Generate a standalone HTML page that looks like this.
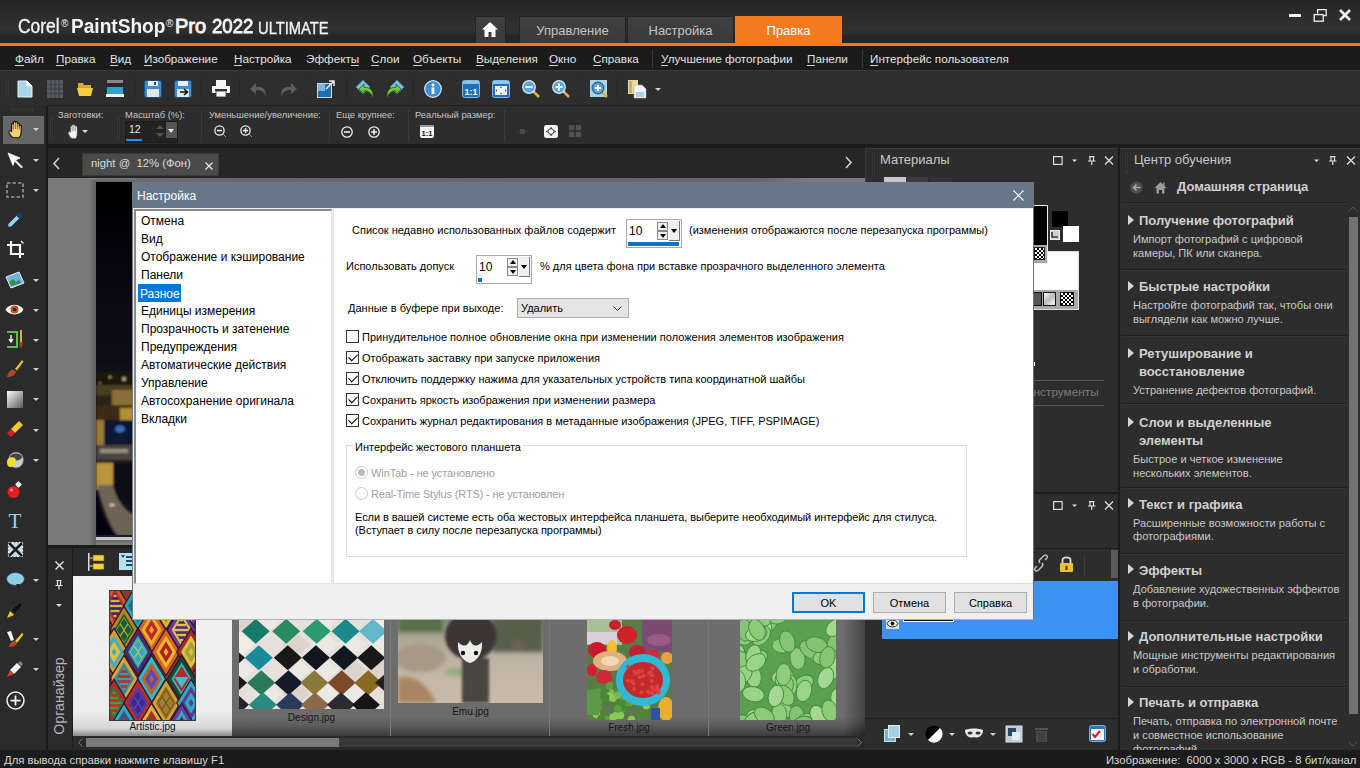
<!DOCTYPE html>
<html><head><meta charset="utf-8">
<style>
*{margin:0;padding:0;box-sizing:border-box}
html,body{width:1360px;height:768px;overflow:hidden;background:#202020;font-family:"Liberation Sans",sans-serif}
.a{position:absolute}
svg{position:absolute;overflow:visible}
#title{left:0;top:0;width:1360px;height:44px;background:linear-gradient(#242424 0%,#2c2c2c 35%,#313131 65%,#2f2c2a 76%,#20262c 84%,#22272c 92%,#2a2624 100%)}
#orange{left:0;top:43px;width:1360px;height:3px;background:#f47a20}
.ttab{position:absolute;top:16px;height:28px;background:linear-gradient(#404040,#393939);color:#c4c4c4;font-size:13px;text-align:center;line-height:28px;border:1px solid #242424;border-bottom:0}
#menubar{left:0;top:46px;width:1360px;height:25px;background:#1b1b1b;border-bottom:1px solid #3b3b3b}
.mi{position:absolute;top:52px;font-size:11.7px;color:#e2e2e2;white-space:nowrap;line-height:13px}
.mi u{text-decoration:none;border-bottom:1px solid #d0d0d0}
.msep{position:absolute;top:4px;width:1px;height:18px;background:#3a3a3a}
#toolbar{left:0;top:71px;width:1360px;height:34px;background:#2e2e2e}
.tsep{position:absolute;top:78px;width:1px;height:20px;background:#3d3d3d;border-right:1px solid #262626}
#opts{left:46px;top:105px;width:1314px;height:41px;background:#2d2d2d;border-top:1px solid #1f1f1f}
#optsb{left:46px;top:144px;width:1314px;height:4px;background:#1c1c1c}
.ol{position:absolute;top:109px;font-size:9.4px;color:#c4c4c4;white-space:nowrap}
.osep{position:absolute;top:110px;width:1px;height:32px;background:#3a3a3a}
#toolbox{left:0;top:105px;width:46px;height:645px;background:#2b2b2b}
#tbsep{left:46px;top:105px;width:2px;height:645px;background:#1a1a1a}
.dd{position:absolute;width:0;height:0;border-left:3px solid transparent;border-right:3px solid transparent;border-top:3px solid #d0d0d0}
#tabrow{left:48px;top:146px;width:817px;height:32px;background:#262626;border-top:2px solid #1b1b1b}
#canvas{left:48px;top:178px;width:817px;height:367px;background:#7a7a7a}
#night{left:96px;top:182px;width:38px;height:360px;background:linear-gradient(#010103 0%,#06060e 40%,#0b0b1a 52%,#15131c 54%,#2a2418 57%,#171410 62%,#3a3420 68%,#6b5a28 75%,#121216 80%,#5e5440 86%,#4a4238 92%,#1a1826 97%,#d0d0d0 98.5%,#333 100%)}
#orgsep{left:48px;top:545px;width:817px;height:3px;background:#1b1b1b}
#orghead{left:73px;top:548px;width:792px;height:28px;background:#2a2a2a}
#orgside{left:48px;top:548px;width:25px;height:202px;background:#2b2b2b;border-right:1px solid #1d1d1d}
#thumbs{left:73px;top:576px;width:792px;height:160px;background:#5e5e5e}
#orgscroll{left:73px;top:736px;width:792px;height:14px;background:#2a2a2a}
#status{left:0;top:750px;width:1360px;height:18px;background:#1c1c1c}
.st{position:absolute;top:754px;font-size:11.3px;color:#d4d4d4;white-space:nowrap}
#rightbg{left:865px;top:146px;width:495px;height:604px;background:#1e1e1e}
#mat{left:865px;top:148px;width:254px;height:344px;background:#2d2d2d;border-left:1px solid #3a3a3a;border-top:1px solid #3a3a3a}
#layers{left:865px;top:494px;width:254px;height:256px;background:#2d2d2d}
#learn{left:1120px;top:148px;width:240px;height:602px;background:#2d2d2d;border-top:1px solid #3a3a3a}
.ptitle{position:absolute;font-size:13px;color:#c6c6c6;white-space:nowrap}
.grip{position:absolute;width:3px;background-image:repeating-linear-gradient(90deg,transparent 0 1px,rgba(43,43,43,1) 1px 2px),repeating-linear-gradient(transparent 0 1px,#424242 1px 2px)}
.lc-h{position:absolute;left:1139px;font-size:13px;font-weight:bold;color:#d0d0d0;white-space:nowrap;line-height:18px;margin-top:1px}
.lc-d{position:absolute;left:1133px;font-size:11.1px;color:#c8c8c8;white-space:nowrap;line-height:14px}
.lc-tri{position:absolute;left:1128px;width:0;height:0;border-top:5px solid transparent;border-bottom:5px solid transparent;border-left:6px solid #d6d6d6;margin-top:-1px}
.lc-sep{position:absolute;left:1121px;width:226px;height:2px;background:#1f1f1f;border-bottom:1px solid #353535}
#dlg{left:132px;top:182px;width:902px;height:438px;background:#f0f0f0;border:1px solid #6a7888;border-right-color:#707070;border-bottom-color:#b0b0b0}
#dlgtitle{left:0;top:0;width:900px;height:25px;background:#687689;color:#fff;font-size:12px;padding:6px 0 0 4px}
#dlist{left:1px;top:26px;width:198px;height:375px;background:#fff;border-style:solid;border-width:2px 1px 1px 2px;border-color:#8a8a8a #e3e3e3 #e3e3e3 #8a8a8a}
.li{position:absolute;left:4px;font-size:12px;color:#000;line-height:16px;white-space:nowrap;padding:0 1px;margin-top:-3px}
.li.sel{left:2px;background:#0078d7;color:#fff;padding:1px 1px 0 2px;height:18px;margin-top:-4px;padding-top:2px}
#dpane{left:200px;top:26px;width:700px;height:375px;background:#fff;border-left:1px solid #e0e0e0;border-bottom:1px solid #dcdcdc}
.t{position:absolute;font-size:11px;color:#000;white-space:nowrap;line-height:13px;margin-top:1px}
.dis{color:#a0a0a0}
.spin{background:#fff;border:1px solid #a9a9a9}
.sv{position:absolute;left:2px;top:4px;font-size:12px}
.sup,.sdn{position:absolute;left:30px;width:11px;height:9px;background:#f0f0f0;border:1px solid #888}
.sup{top:2px}.sdn{top:11px}
.sup:after{content:"";position:absolute;left:2px;top:1px;border:3px solid transparent;border-bottom:4px solid #000;border-top:0}
.sdn:after{content:"";position:absolute;left:2px;top:2px;border:3px solid transparent;border-top:4px solid #000;border-bottom:0}
.sdd{position:absolute;left:42px;top:1px;width:11px;height:20px;background:#f0f0f0;border-right:1px solid #777;border-bottom:1px solid #777}
.sdd:after{content:"";position:absolute;left:2px;top:8px;border:3px solid transparent;border-top:4px solid #000;border-bottom:0}
.sbar{position:absolute;left:1px;bottom:1px;height:4px;background:#0d70c9}
.combo{background:#e5e5e5;border:1px solid #adadad;font-size:11px}
.cb{width:13px;height:13px;border:1px solid #333;background:#fff}
.cb.ck:after{content:"";position:absolute;left:2px;top:0px;width:7px;height:4px;border-left:1.3px solid #000;border-bottom:1.3px solid #000;transform:translate(0px,2px) rotate(-45deg) scaleX(1.1)}
.grp{border:1px solid #dcdcdc}
.rad{width:13px;height:13px;border:1px solid #c8c8c8;border-radius:50%;background:#fff}
.rad.on:after{content:"";position:absolute;left:2px;top:2px;width:7px;height:7px;border-radius:50%;background:#bcbcbc}
.btn{background:#e1e1e1;border:1px solid #adadad;font-size:11px;text-align:center;line-height:20px;color:#000}
.btn.def{border:2px solid #0078d7;line-height:18px}
</style></head><body>
<div id="title" class="a"></div>
<div class="a" style="left:18px;top:14px;font-size:20px;color:#f4f4f4;white-space:nowrap;line-height:24px">
<span style="position:absolute;left:0;top:0;display:inline-block;transform:scaleX(0.87);transform-origin:0 0;-webkit-text-stroke:0.35px #f4f4f4">Corel</span>
<span style="position:absolute;left:43px;top:-2px;font-size:10px">®</span>
<span style="position:absolute;left:53px;top:0;font-weight:bold;display:inline-block;transform:scaleX(0.955);transform-origin:0 0">PaintShop</span>
<span style="position:absolute;left:148px;top:-2px;font-size:10px">®</span>
<span style="position:absolute;left:157px;top:0;display:inline-block;transform:scaleX(1.0);transform-origin:0 0;-webkit-text-stroke:0.9px #f4f4f4">Pro</span>
<span style="position:absolute;left:194px;top:0;display:inline-block;transform:scaleX(0.93);transform-origin:0 0;-webkit-text-stroke:0.9px #f4f4f4">2022</span>
<span style="position:absolute;left:240px;top:3px;font-size:16px;display:inline-block;transform:scaleX(0.92);transform-origin:0 0;-webkit-text-stroke:0.3px #f4f4f4">ULTIMATE</span>
</div>
<div class="ttab" style="left:475px;width:31px"></div>
<svg style="left:481px;top:21px" width="18" height="17" viewBox="0 0 18 17"><path d="M9 1L1 8.5H3.5V16H7.5V11H10.5V16H14.5V8.5H17Z" fill="#fff"/></svg>
<div class="ttab" style="left:519px;width:107px">Управление</div>
<div class="ttab" style="left:627px;width:107px">Настройка</div>
<div class="ttab" style="left:735px;width:107px;background:#f47a20;color:#fff;border-color:#f47a20">Правка</div>
<div id="orange" class="a"></div>
<svg style="left:1289px;top:14px" width="12" height="4"><rect x="0" y="0" width="12" height="3" fill="#f0f0f0"/></svg>
<svg style="left:1313px;top:8px" width="14" height="14" viewBox="0 0 14 14"><path d="M4.6 5.5V1.6H13.2V7.6H10.4" fill="none" stroke="#f0f0f0" stroke-width="1.3"/><rect x="1.2" y="6.6" width="9" height="6.6" fill="none" stroke="#f0f0f0" stroke-width="1.3"/></svg>
<svg style="left:1339px;top:9px" width="12" height="12" viewBox="0 0 12 12"><path d="M1 1L11 11M11 1L1 11" stroke="#f0f0f0" stroke-width="2.6"/></svg>
<div id="menubar" class="a"></div>
<div class="mi" style="left:15px"><u>Ф</u>айл</div>
<div class="mi" style="left:56px"><u>П</u>равка</div>
<div class="mi" style="left:110px"><u>В</u>ид</div>
<div class="mi" style="left:144px"><u>И</u>зображение</div>
<div class="mi" style="left:234px"><u>Н</u>астройка</div>
<div class="mi" style="left:306px">Эффект<u>ы</u></div>
<div class="mi" style="left:371px"><u>С</u>лои</div>
<div class="mi" style="left:413px"><u>О</u>бъекты</div>
<div class="mi" style="left:476px"><u>В</u>ыделения</div>
<div class="mi" style="left:549px"><u>О</u>кно</div>
<div class="mi" style="left:593px"><u>С</u>правка</div>
<div class="msep" style="left:652px;top:50px"></div>
<div class="mi" style="left:661px"><u>У</u>лучшение фотографии</div>
<div class="mi" style="left:807px"><u>П</u>анели</div>
<div class="msep" style="left:862px;top:50px"></div>
<div class="mi" style="left:870px"><u>И</u>нтерфейс пользователя</div>
<div id="toolbar" class="a"></div>
<div class="grip" style="left:6px;top:77px;height:20px;width:4px"></div>
<!-- new doc -->
<svg style="left:17px;top:80px" width="16" height="18" viewBox="0 0 16 18"><path d="M1 1H10L15 6V17H1Z" fill="#a9d6ea" stroke="#e8f4fa" stroke-width="1"/><path d="M10 1V6H15" fill="#fff" stroke="#fff"/></svg>
<!-- grid -->
<svg style="left:47px;top:80px" width="16" height="18" viewBox="0 0 16 18"><rect x="0" y="0" width="16" height="18" fill="#555a60"/><path d="M4 0V18M8 0V18M12 0V18M0 4.5H16M0 9H16M0 13.5H16" stroke="#3b3f44" stroke-width="1"/></svg>
<!-- open folder -->
<svg style="left:77px;top:81px" width="16" height="16" viewBox="0 0 16 16"><path d="M1 2H6L7 4H14V8H1Z" fill="#d9a928"/><path d="M0 7H16L14 15H2Z" fill="#f2cf3c"/></svg>
<!-- scanner -->
<svg style="left:106px;top:80px" width="18" height="18" viewBox="0 0 18 18"><rect x="1" y="0" width="16" height="3" fill="#888"/><path d="M2 3H16L14 7H4Z" fill="#2a2a2a"/><rect x="1" y="7" width="16" height="7" fill="#2ea3d0"/><rect x="0" y="14" width="18" height="3" fill="#f2f2f2"/></svg>
<div class="tsep" style="left:134px"></div>
<!-- save -->
<svg style="left:144px;top:80px" width="18" height="18" viewBox="0 0 18 18"><rect x="0.5" y="0.5" width="17" height="17" rx="2" fill="#3b8fd0" stroke="#1b4f80"/><rect x="4" y="1" width="10" height="5" fill="#e8eef4"/><rect x="10" y="2" width="2" height="3" fill="#1b4f80"/><rect x="3" y="9" width="12" height="8" fill="#dfe6ec"/></svg>
<!-- save as -->
<svg style="left:174px;top:80px" width="18" height="18" viewBox="0 0 18 18"><rect x="0.5" y="0.5" width="17" height="17" rx="2" fill="#3b8fd0" stroke="#1b4f80"/><rect x="4" y="1" width="10" height="5" fill="#e8eef4"/><rect x="3" y="9" width="12" height="8" fill="#dfe6ec"/><path d="M6 12H13M10 9L13.5 12L10 15" stroke="#111" stroke-width="1.6" fill="none"/></svg>
<div class="tsep" style="left:201px"></div>
<!-- print -->
<svg style="left:212px;top:80px" width="18" height="18" viewBox="0 0 18 18"><rect x="4" y="0" width="10" height="6" fill="#f4f4f4"/><rect x="0" y="6" width="18" height="7" rx="1" fill="#f4f4f4"/><rect x="3" y="9" width="12" height="2" fill="#333"/><rect x="4" y="11" width="10" height="6" fill="#f4f4f4" stroke="#333" stroke-width="0.8"/></svg>
<div class="tsep" style="left:239px"></div>
<!-- undo grey -->
<svg style="left:250px;top:81px" width="17" height="16" viewBox="0 0 17 16"><path d="M16 15C16 8 12 5 6 6V2L0 8L6 13V9C11 8.5 14 11 16 15Z" fill="#5a5f63"/></svg>
<svg style="left:280px;top:81px" width="17" height="16" viewBox="0 0 17 16"><path d="M1 15C1 8 5 5 11 6V2L17 8L11 13V9C6 8.5 3 11 1 15Z" fill="#5a5f63"/></svg>
<div class="tsep" style="left:307px"></div>
<!-- resize -->
<svg style="left:317px;top:80px" width="18" height="18" viewBox="0 0 18 18"><rect x="0.5" y="3.5" width="14" height="14" fill="#1d6fb0" stroke="#cfd8de"/><rect x="1" y="4" width="7" height="7" fill="#78b8e0"/><path d="M9 9L17 1M12 1H17V6" stroke="#f0f0f0" stroke-width="1.5" fill="none"/></svg>
<div class="tsep" style="left:346px"></div>
<!-- undo blue/green -->
<svg style="left:356px;top:80px" width="19" height="18" viewBox="0 0 19 18"><path d="M0 7L7 0L14 7L7 14Z" fill="#7fb9e0" stroke="#3b7cb0"/><path d="M17 17C17 10 14 7 8 7.5V4L3 9L8 14V10.5C12 10.5 15 13 17 17Z" fill="#78c83c" stroke="#2f6b12" stroke-width="0.8"/></svg>
<svg style="left:385px;top:80px" width="19" height="18" viewBox="0 0 19 18"><path d="M19 7L12 0L5 7L12 14Z" fill="#7fb9e0" stroke="#3b7cb0"/><path d="M2 17C2 10 5 7 11 7.5V4L16 9L11 14V10.5C7 10.5 4 13 2 17Z" fill="#78c83c" stroke="#2f6b12" stroke-width="0.8"/></svg>
<div class="tsep" style="left:413px"></div>
<!-- info -->
<svg style="left:424px;top:80px" width="18" height="18" viewBox="0 0 18 18"><circle cx="9" cy="9" r="8.3" fill="#3e8fd3" stroke="#d8e8f4" stroke-width="1.2"/><circle cx="9" cy="5" r="1.5" fill="#fff"/><rect x="7.6" y="7.5" width="2.8" height="6.5" fill="#fff"/></svg>
<div class="tsep" style="left:451px"></div>
<!-- 1:1 -->
<svg style="left:462px;top:80px" width="18" height="18" viewBox="0 0 18 18"><rect x="0.5" y="0.5" width="17" height="17" rx="2" fill="#1e6fb5" stroke="#7db9e6"/><rect x="1" y="1" width="16" height="3" fill="#8fc5ea"/><text x="9" y="14.5" font-size="9" font-weight="bold" fill="#fff" text-anchor="middle" font-family="Liberation Sans">1:1</text></svg>
<!-- fit -->
<svg style="left:492px;top:80px" width="18" height="18" viewBox="0 0 18 18"><rect x="0.5" y="0.5" width="17" height="17" rx="2" fill="#1e6fb5" stroke="#7db9e6"/><rect x="1" y="1" width="16" height="3" fill="#8fc5ea"/><rect x="3" y="6" width="12" height="9" fill="#f2f2f2"/><path d="M9 6.5L7.5 8H10.5ZM9 14.5L7.5 13H10.5ZM3.5 10.5L5 9V12ZM14.5 10.5L13 9V12Z" fill="#1e6fb5"/></svg>
<!-- zoom out -->
<svg style="left:522px;top:80px" width="18" height="18" viewBox="0 0 18 18"><path d="M11 11L17 17" stroke="#e0b040" stroke-width="2.5"/><circle cx="7" cy="7" r="6.3" fill="#5ea7d8" stroke="#dbe9f3" stroke-width="1.2"/><rect x="3.5" y="6" width="7" height="2" fill="#fff"/></svg>
<!-- zoom in -->
<svg style="left:552px;top:80px" width="18" height="18" viewBox="0 0 18 18"><path d="M11 11L17 17" stroke="#e0b040" stroke-width="2.5"/><circle cx="7" cy="7" r="6.3" fill="#5ea7d8" stroke="#dbe9f3" stroke-width="1.2"/><rect x="3.5" y="6" width="7" height="2" fill="#fff"/><rect x="6" y="3.5" width="2" height="7" fill="#fff"/></svg>
<div class="tsep" style="left:580px"></div>
<!-- zoom box -->
<svg style="left:590px;top:80px" width="18" height="18" viewBox="0 0 18 18"><rect x="0" y="0" width="17" height="17" fill="#a9d3ea"/><path d="M11 11L17 17" stroke="#e0b040" stroke-width="2.5"/><circle cx="8" cy="8" r="5.8" fill="#5ea7d8" stroke="#1d5f90" stroke-width="1.2"/><rect x="5" y="7" width="6" height="2" fill="#fff"/><rect x="7" y="5" width="2" height="6" fill="#fff"/></svg>
<div class="tsep" style="left:617px"></div>
<!-- paste -->
<svg style="left:628px;top:80px" width="19" height="18" viewBox="0 0 19 18"><rect x="0" y="0" width="10" height="14" fill="#e8d9a0"/><rect x="1" y="1" width="3" height="12" fill="#c8b070"/><path d="M6 5H14L18 9V18H6Z" fill="#f4f4f4" stroke="#bbb" stroke-width="0.6"/><rect x="8" y="12" width="8" height="5" fill="#a8d4ea"/></svg>
<div class="dd" style="left:655px;top:88px;border-left-width:3px;border-right-width:3px;border-top-width:3px"></div>
<div id="opts" class="a"></div>
<div id="optsb" class="a"></div>
<div class="grip" style="left:50px;top:116px;height:24px;width:4px"></div>
<div class="ol" style="left:58px">Заготовки:</div>
<svg style="left:68px;top:124px" width="13" height="15" viewBox="0 0 13 15"><path d="M3 14C1.5 12 0.5 9.5 0.5 8.5C0.5 7.5 2 7.5 2.7 8.8V3C2.7 2 4.2 2 4.2 3V7.5V1.5C4.2 0.5 5.8 0.5 5.8 1.5V7V2C5.8 1 7.4 1 7.4 2V7.5V3C7.4 2 9 2 9 3V10C9 12 8 14 7.5 14.5Z" fill="#f2f2f2" stroke="#999" stroke-width="0.5"/></svg>
<div class="dd" style="left:82px;top:130px;border-top-color:#ddd"></div>
<div class="grip" style="left:117px;top:116px;height:24px;width:4px"></div>
<div class="ol" style="left:125px">Масштаб (%):</div>
<div class="a" style="left:125px;top:121px;width:53px;height:22px;background:#222;border:1px solid #1a1a1a"></div>
<div class="a" style="left:129px;top:123px;font-size:10.5px;color:#dfe6f5">12</div>
<div class="a" style="left:126px;top:139px;width:16px;height:2px;background:#2f8ee6"></div>
<svg style="left:156px;top:124px" width="8" height="14" viewBox="0 0 8 14"><path d="M0 5L4 1L8 5ZM0 9L4 13L8 9Z" fill="#555"/></svg>
<div class="a" style="left:166px;top:122px;width:11px;height:16px;background:#555"></div>
<div class="dd" style="left:168px;top:129px;border-left-width:3.5px;border-right-width:3.5px;border-top-width:4px;border-top-color:#e6e6e6"></div>
<div class="osep" style="left:201px"></div>
<div class="ol" style="left:209px">Уменьшение/увеличение:</div>
<svg style="left:214px;top:125px" width="13" height="13" viewBox="0 0 13 13"><circle cx="5.5" cy="5.5" r="4.6" fill="none" stroke="#eee" stroke-width="1.3"/><rect x="3" y="4.8" width="5" height="1.5" fill="#eee"/><path d="M9 9L12 12" stroke="#999" stroke-width="1"/></svg>
<svg style="left:240px;top:125px" width="13" height="13" viewBox="0 0 13 13"><circle cx="5.5" cy="5.5" r="4.6" fill="none" stroke="#eee" stroke-width="1.3"/><rect x="3" y="4.8" width="5" height="1.5" fill="#eee"/><rect x="4.8" y="3" width="1.5" height="5" fill="#eee"/><path d="M9 9L12 12" stroke="#999" stroke-width="1"/></svg>
<div class="osep" style="left:329px"></div>
<div class="ol" style="left:336px">Еще крупнее:</div>
<svg style="left:341px;top:126px" width="12" height="12" viewBox="0 0 12 12"><circle cx="6" cy="6" r="5.2" fill="none" stroke="#eee" stroke-width="1.3"/><rect x="3" y="5.2" width="6" height="1.6" fill="#eee"/></svg>
<svg style="left:368px;top:126px" width="12" height="12" viewBox="0 0 12 12"><circle cx="6" cy="6" r="5.2" fill="none" stroke="#eee" stroke-width="1.3"/><rect x="3" y="5.2" width="6" height="1.6" fill="#eee"/><rect x="5.2" y="3" width="1.6" height="6" fill="#eee"/></svg>
<div class="osep" style="left:408px"></div>
<div class="ol" style="left:415px">Реальный размер:</div>
<svg style="left:420px;top:125px" width="14" height="13" viewBox="0 0 14 13"><rect x="0" y="0" width="14" height="13" rx="2" fill="#f4f4f4"/><rect x="0" y="0" width="14" height="2" fill="#999"/><text x="7" y="11" font-size="7.5" font-weight="bold" fill="#111" text-anchor="middle" font-family="Liberation Sans">1:1</text></svg>
<div class="osep" style="left:504px"></div>
<svg style="left:517px;top:128px" width="11" height="8" viewBox="0 0 11 8"><rect x="3" y="1" width="5" height="5" fill="#4a4a4a"/><path d="M0 3.5H3M8 3.5H11" stroke="#3a3a3a"/></svg>
<svg style="left:544px;top:125px" width="14" height="13" viewBox="0 0 14 13"><rect x="0" y="0" width="14" height="13" rx="2.5" fill="#f4f4f4"/><path d="M7 2L5.5 3.5H8.5ZM7 11L5.5 9.5H8.5ZM2 6.5L3.5 5V8ZM12 6.5L10.5 5V8Z" fill="#222"/><circle cx="7" cy="6.5" r="2.8" fill="none" stroke="#222" stroke-width="0.8"/></svg>
<svg style="left:569px;top:125px" width="12" height="12" viewBox="0 0 12 12"><rect x="0" y="0" width="12" height="12" fill="#505050"/><path d="M6 0V12M0 6H12" stroke="#2d2d2d" stroke-width="1.5"/></svg>
<div id="toolbox" class="a"></div>
<div id="tbsep" class="a"></div>
<div class="grip" style="left:12px;top:107px;height:4px;width:22px"></div>
<div class="a" style="left:3px;top:116px;width:41px;height:28px;background:#666;border-top:1px solid #6e6e6e"></div>
<!-- hand -->
<svg style="left:8px;top:120px" width="16" height="19" viewBox="0 0 16 19"><path d="M4.5 17.5C2.5 15.5 0.8 12.8 0.8 11.8C0.8 10.5 2.6 10.3 3.6 11.6V4.2C3.6 3 5.4 3 5.4 4.2V2.3C5.4 1 7.4 1 7.4 2.3V2.5C7.4 1.3 9.4 1.3 9.4 2.5V4C9.4 2.9 11.3 2.9 11.3 4V6C11.3 5 13.2 5 13.2 6V12C13.2 15 11.8 17 11 17.8Z" fill="#f6d070" stroke="#111" stroke-width="1.1" stroke-linejoin="round"/><path d="M5.4 4V9.5M7.4 2.5V9M9.4 3V9M11.3 5V9.5" stroke="#6a4a18" stroke-width="0.7"/></svg>
<div class="dd" style="left:33px;top:128px"></div>
<!-- arrow -->
<svg style="left:7px;top:152px" width="17" height="17" viewBox="0 0 17 17"><path d="M1 1L13 6L8.5 8L15.5 15L14.5 16L7.5 9L6 13.5Z" fill="#f8f8f8" stroke="#f8f8f8" stroke-width="0.8" stroke-linejoin="round"/></svg>
<div class="dd" style="left:33px;top:159px"></div>
<!-- selection -->
<svg style="left:6px;top:182px" width="18" height="16" viewBox="0 0 18 16"><rect x="1" y="1" width="16" height="14" fill="none" stroke="#9a9a9a" stroke-width="1.6" stroke-dasharray="3.5 2"/></svg>
<div class="dd" style="left:33px;top:189px"></div>
<!-- dropper -->
<svg style="left:7px;top:210px" width="18" height="18" viewBox="0 0 18 18"><path d="M12 2L16 6L13 9L9 5Z" fill="#1d3f5a"/><path d="M9.5 5.5L12.5 8.5L4 17H1V14Z" fill="#9fd0ea" stroke="#1d3f5a" stroke-width="0.8"/></svg>
<!-- crop -->
<svg style="left:7px;top:241px" width="17" height="17" viewBox="0 0 17 17"><path d="M4 0V13H17M0 4H13V17" fill="none" stroke="#f5f5f5" stroke-width="2.2"/><path d="M14 0L16.5 2.5" stroke="#f5f5f5" stroke-width="1.2"/></svg>
<!-- photo -->
<svg style="left:6px;top:272px" width="18" height="16" viewBox="0 0 18 16"><path d="M0 5L13 0L18 11L5 16Z" fill="#6fb5d8" stroke="#e8f2f8" stroke-width="1"/><path d="M3 10L7 7L10 10L13 8L15 11L5 14Z" fill="#3d8a4a"/></svg>
<div class="dd" style="left:33px;top:279px"></div>
<!-- eye -->
<svg style="left:5px;top:303px" width="19" height="13" viewBox="0 0 19 13"><path d="M0.5 6.5C4 0 15 0 18.5 6.5C15 13 4 13 0.5 6.5Z" fill="#f5f5f5"/><circle cx="9.5" cy="6.5" r="4" fill="#c0502a"/><circle cx="9.5" cy="6.5" r="1.6" fill="#3a1a10"/></svg>
<div class="dd" style="left:33px;top:309px"></div>
<!-- straighten -->
<svg style="left:6px;top:330px" width="19" height="19" viewBox="0 0 19 19"><rect x="1" y="1" width="11" height="2" fill="#5ec04a"/><rect x="1" y="16" width="11" height="2" fill="#5ec04a"/><rect x="10" y="1" width="2" height="17" fill="#5ec04a"/><path d="M5 5V11M3 9L5 12L7 9" stroke="#fff" stroke-width="1.3" fill="none"/><rect x="14" y="0" width="2" height="12" fill="#e0b030"/><path d="M13 12H17L16 17L15 18L14 17Z" fill="#a04020"/></svg>
<div class="dd" style="left:33px;top:339px"></div>
<!-- brush -->
<svg style="left:6px;top:359px" width="18" height="19" viewBox="0 0 18 19"><path d="M9 10L16 1L17.5 2.5L11 11.5Z" fill="#e8c030"/><path d="M1 18C2 14 4 11 7 10.5L10 13C9 16 6 18 1 18Z" fill="#b04a20"/></svg>
<div class="dd" style="left:33px;top:368px"></div>
<!-- gradient -->
<svg style="left:7px;top:391px" width="16" height="17" viewBox="0 0 16 17"><defs><linearGradient id="gr1" x1="0" y1="0" x2="1" y2="1"><stop offset="0" stop-color="#fafafa"/><stop offset="1" stop-color="#5a5a5a"/></linearGradient></defs><rect x="0" y="0" width="16" height="17" fill="url(#gr1)"/></svg>
<div class="dd" style="left:33px;top:398px"></div>
<!-- eraser -->
<svg style="left:6px;top:420px" width="18" height="18" viewBox="0 0 18 18"><path d="M5 9L13 1L17 5L9 13Z" fill="#f0c830"/><path d="M1 13L5 9L9 13L5 17Z" fill="#d02020"/></svg>
<div class="dd" style="left:33px;top:429px"></div>
<!-- fill -->
<svg style="left:6px;top:451px" width="18" height="18" viewBox="0 0 18 18"><ellipse cx="10" cy="9" rx="7.5" ry="8" fill="#ccc" stroke="#666" stroke-width="0.8"/><ellipse cx="10" cy="6" rx="6" ry="3.5" fill="#444"/><path d="M1 11C1 7 5 5 9 7C11 9 9 15 5 16C2 16 1 14 1 11Z" fill="#f2e030"/></svg>
<div class="dd" style="left:33px;top:459px"></div>
<!-- pin -->
<svg style="left:7px;top:481px" width="16" height="18" viewBox="0 0 16 18"><rect x="9" y="1" width="5" height="5" rx="1" transform="rotate(45 11.5 3.5)" fill="#e8e8e8"/><circle cx="6.5" cy="11" r="6" fill="#e02020"/><circle cx="4.5" cy="9" r="1.5" fill="#f88"/></svg>
<!-- T -->
<svg style="left:7px;top:511px" width="16" height="18" viewBox="0 0 16 18"><text x="8" y="16.5" font-size="21" fill="#8fd4ec" text-anchor="middle" font-family="Liberation Serif">T</text></svg>
<!-- X pattern -->
<svg style="left:7px;top:541px" width="17" height="17" viewBox="0 0 17 17"><rect x="1.5" y="1.5" width="14" height="14" fill="#c8dce8" stroke="#fff" stroke-width="1.2" stroke-dasharray="2 1.5"/><path d="M2 2L15 15M15 2L2 15" stroke="#1c1c1c" stroke-width="2.5"/></svg>
<!-- bubble -->
<svg style="left:6px;top:572px" width="19" height="18" viewBox="0 0 19 18"><ellipse cx="9.5" cy="7" rx="9" ry="6.5" fill="#8fcfe6" stroke="#1d3f5a" stroke-width="0.8"/><path d="M10 12L14 17L13 12Z" fill="#1c1c1c"/></svg>
<div class="dd" style="left:33px;top:579px"></div>
<!-- pen -->
<svg style="left:6px;top:601px" width="18" height="18" viewBox="0 0 18 18"><path d="M1 17L4 10L8 14Z" fill="#f0c830"/><path d="M5 9L14 1L17 4L9 13Z" fill="#111" stroke="#555" stroke-width="0.5"/></svg>
<!-- paintbrush2 -->
<svg style="left:6px;top:630px" width="18" height="18" viewBox="0 0 18 18"><path d="M1 2L5 11L8 10L5 1Z" fill="#f4f4f4"/><path d="M9 11L16 3L17.5 4.5L11 13Z" fill="#f0c830"/><path d="M3 17C4 13 6 11 9 11L11 13C10 16 7 17 3 17Z" fill="#b04a20"/></svg>
<div class="dd" style="left:33px;top:638px"></div>
<!-- dropper2 -->
<svg style="left:6px;top:660px" width="18" height="18" viewBox="0 0 18 18"><path d="M11 3L15 7L8 14L4 10Z" fill="#f4f4f4"/><path d="M14 1L17 4L15 6L12 3Z" fill="#888"/><path d="M1 17L4 10L8 14Z" fill="#d04020"/></svg>
<div class="dd" style="left:33px;top:668px"></div>
<!-- plus circle -->
<svg style="left:6px;top:691px" width="19" height="19" viewBox="0 0 19 19"><circle cx="9.5" cy="9.5" r="8.5" fill="none" stroke="#f0f0f0" stroke-width="1.5"/><rect x="4.5" y="8.7" width="10" height="1.8" fill="#f0f0f0"/><rect x="8.6" y="4.5" width="1.8" height="10" fill="#f0f0f0"/></svg>
<div id="tabrow" class="a"></div>
<svg style="left:53px;top:157px" width="7" height="13" viewBox="0 0 7 13"><path d="M6 1L1 6.5L6 12" fill="none" stroke="#cfcfcf" stroke-width="1.6"/></svg>
<div class="a" style="left:82px;top:153px;width:137px;height:23px;background:#4a4a4a;border:1px solid #3a3a3a"></div>
<div class="a" style="left:91px;top:157px;font-size:11.3px;color:#dcdcdc;white-space:nowrap;line-height:13px">night @&nbsp; 12% (Фон)</div>
<svg style="left:205px;top:162px" width="8" height="8" viewBox="0 0 8 8"><path d="M0.5 0.5L7.5 7.5M7.5 0.5L0.5 7.5" stroke="#e0e0e0" stroke-width="1.4"/></svg>
<svg style="left:845px;top:156px" width="7" height="13" viewBox="0 0 7 13"><path d="M1 1L6 6.5L1 12" fill="none" stroke="#cfcfcf" stroke-width="1.6"/></svg>
<div id="canvas" class="a"></div>
<div class="a" style="left:89px;top:180px;width:7px;height:365px;background:linear-gradient(90deg,rgba(0,0,0,0),rgba(0,0,0,.22))"></div><div class="a" style="left:96px;top:178px;width:40px;height:4px;background:linear-gradient(rgba(0,0,0,0),rgba(0,0,0,.2))"></div><div class="a" style="left:136px;top:178px;width:729px;height:4px;background:linear-gradient(90deg,#6a6a6a,#666 85%,#7a7a7a 92%)"></div>
<svg style="left:96px;top:182px;overflow:hidden" width="38" height="360" viewBox="0 0 38 360"><defs><linearGradient id="ng" x1="0" y1="0" x2="0" y2="1"><stop offset="0" stop-color="#000000"/><stop offset="0.15" stop-color="#030308"/><stop offset="0.35" stop-color="#0b0a17"/><stop offset="0.5" stop-color="#0d0c18"/><stop offset="0.53" stop-color="#12101a"/><stop offset="1" stop-color="#14121a"/></linearGradient><filter id="nb" x="-20%" y="-20%" width="140%" height="140%"><feGaussianBlur stdDeviation="1.3"/></filter></defs>
<rect width="38" height="360" fill="url(#ng)"/>
<g filter="url(#nb)">
<rect x="0" y="190" width="38" height="13" fill="#1a1610"/>
<circle cx="14" cy="195" r="1.5" fill="#b0a070"/><circle cx="28" cy="197" r="2" fill="#c0b080"/><circle cx="4" cy="201" r="1" fill="#a09060"/>
<rect x="0" y="203" width="38" height="10" fill="#4a3e22"/>
<rect x="16" y="208" width="21" height="20" fill="#8a7038"/>
<rect x="0" y="213" width="16" height="15" fill="#2a2014"/>
<rect x="0" y="223" width="38" height="15" fill="#3a2c18"/>
<rect x="24" y="226" width="13" height="17" fill="#b09030"/>
<rect x="8" y="238" width="30" height="25" fill="#0e1630"/>
<ellipse cx="24" cy="247" rx="5" ry="3.5" fill="#3a70c0"/>
<rect x="0" y="238" width="8" height="25" fill="#9a7a30"/>
<rect x="0" y="263" width="38" height="15" fill="#4a4440"/>
<rect x="4" y="267" width="28" height="4" fill="#9a9080"/>
<rect x="0" y="278" width="38" height="5" fill="#201814"/>
<rect x="0" y="281" width="17" height="27" fill="#b8943c"/>
<rect x="17" y="281" width="25" height="40" fill="#0a0a12"/>
<path d="M1 303L17 303C20 318 29 328 38 333L38 354L22 354C12 343 6 323 1 303Z" fill="#6e6454"/>
<path d="M0 308C4 328 10 346 22 354H0Z" fill="#050508"/>
<ellipse cx="16" cy="323" rx="3" ry="1.2" fill="#d0d0c0"/>
</g>
<rect x="0" y="353" width="38" height="2" fill="#1a1a30"/>
<rect x="0" y="355" width="38" height="3" fill="#c8c8c8"/><rect x="0" y="358" width="38" height="2" fill="#6a6a6a"/>
</svg>
<div id="orgsep" class="a"></div>
<div id="orgside" class="a"></div>
<div id="orghead" class="a"></div>
<svg style="left:55px;top:561px" width="9" height="9" viewBox="0 0 9 9"><path d="M0.5 0.5L8.5 8.5M8.5 0.5L0.5 8.5" stroke="#e8e8e8" stroke-width="1.4"/></svg>
<svg style="left:55px;top:580px" width="8" height="10" viewBox="0 0 8 10"><path d="M1.5 0.5H6.5M2.5 0.5V5M5.5 0.5V5M0.5 5.5H7.5M4 5.5V9.5" stroke="#e8e8e8" stroke-width="1.2" fill="none"/></svg>
<div class="dd" style="left:56px;top:604px;border-top-color:#ddd"></div>
<div class="a" style="left:19px;top:689px;width:80px;font-size:14.2px;color:#b4b4b4;white-space:nowrap;transform:rotate(-90deg);transform-origin:50% 50%;line-height:14px;text-align:center">Органайзер</div>
<!-- organizer header icons -->
<svg style="left:88px;top:553px" width="24" height="18" viewBox="0 0 24 18"><rect x="0" y="0" width="1.5" height="18" fill="#ddd"/><path d="M1.5 5H5M1.5 13H5" stroke="#ddd"/><rect x="5" y="2" width="11" height="6" fill="#f2d040" stroke="#6a5010" stroke-width="0.6"/><rect x="5" y="10.5" width="11" height="6" fill="#f2d040" stroke="#6a5010" stroke-width="0.6"/></svg>
<svg style="left:119px;top:553px" width="16" height="17" viewBox="0 0 16 17"><rect x="0" y="0" width="16" height="17" fill="#b8e0f0"/><path d="M2 2L6 2L4 5Z" fill="#1a4a70"/><path d="M7 4H14M7 8H14M7 12H14" stroke="#1a4a70" stroke-width="2"/></svg>
<div id="thumbs" class="a"></div>
<div class="a" style="left:73px;top:576px;width:159px;height:160px;background:linear-gradient(#f2f2f2,#ececec 85%,#d8d8d8 95%,#8a8a8a)"></div>
<div class="a" style="left:232px;top:576px;width:633px;height:160px;background:linear-gradient(#6e6e6e,#6c6c6c 88%,#5a5a5a 94%,#3a3a3a)"></div>
<div class="a" style="left:390px;top:576px;width:1px;height:160px;background:#7a7a7a"></div>
<div class="a" style="left:549px;top:576px;width:1px;height:160px;background:#7a7a7a"></div>
<div class="a" style="left:708px;top:576px;width:1px;height:160px;background:#7a7a7a"></div>
<!-- Artistic -->
<svg style="left:109px;top:590px;overflow:hidden" width="87" height="131" viewBox="0 0 87 131"><defs><filter id="ab"><feGaussianBlur stdDeviation="0.5"/></filter></defs><rect width="87" height="131" fill="#8a3a2a"/><g filter="url(#ab)"><path d="M6.0 -9.0L21.0 16.0L6.0 41.0L-9.0 16.0Z" fill="#2a1a30"/><path d="M6.0 -6.6L19.6 16.0L6.0 38.6L-7.6 16.0Z" fill="#d05a20"/><path d="M6.0 -0.5L16.0 16.0L6.0 32.5L-4.0 16.0Z" fill="#b02a2a"/><path d="M6.0 3.5L13.5 16.0L6.0 28.5L-1.5 16.0Z" fill="#2a2a6a"/><rect x="4.5" y="4.8" width="3.0" height="2.4" fill="#e0b030"/><rect x="1.5" y="9.8" width="9.0" height="2.4" fill="#e0b030"/><rect x="-1.5" y="14.8" width="15.0" height="2.4" fill="#e0b030"/><rect x="1.5" y="19.8" width="9.0" height="2.4" fill="#e0b030"/><rect x="4.5" y="24.8" width="3.0" height="2.4" fill="#e0b030"/><path d="M29.0 -9.0L44.0 16.0L29.0 41.0L14.0 16.0Z" fill="#2a1a30"/><path d="M29.0 -6.6L42.6 16.0L29.0 38.6L15.4 16.0Z" fill="#2aa0b0"/><path d="M29.0 -0.5L39.0 16.0L29.0 32.5L19.0 16.0Z" fill="#1a6a8a"/><path d="M29.0 5.5L35.5 16.0L29.0 26.5L22.5 16.0Z" fill="#2a2a50"/><path d="M29.0 12.0L31.5 16.0L29.0 20.0L26.5 16.0Z" fill="#1a6a8a"/><path d="M57.0 -9.0L72.0 16.0L57.0 41.0L42.0 16.0Z" fill="#2a1a30"/><path d="M57.0 -6.6L70.6 16.0L57.0 38.6L43.4 16.0Z" fill="#e0b030"/><path d="M57.0 -0.5L67.0 16.0L57.0 32.5L47.0 16.0Z" fill="#c06020"/><path d="M57.0 5.5L63.5 16.0L57.0 26.5L50.5 16.0Z" fill="#a02a2a"/><path d="M57.0 12.0L59.5 16.0L57.0 20.0L54.5 16.0Z" fill="#c06020"/><path d="M82.0 -9.0L97.0 16.0L82.0 41.0L67.0 16.0Z" fill="#2a1a30"/><path d="M82.0 -6.6L95.6 16.0L82.0 38.6L68.4 16.0Z" fill="#6a3a90"/><path d="M82.0 -0.5L92.0 16.0L82.0 32.5L72.0 16.0Z" fill="#e0c040"/><path d="M82.0 3.5L89.5 16.0L82.0 28.5L74.5 16.0Z" fill="#4a2a80"/><rect x="80.5" y="4.8" width="3.0" height="2.4" fill="#e0c040"/><rect x="77.5" y="9.8" width="9.0" height="2.4" fill="#e0c040"/><rect x="74.5" y="14.8" width="15.0" height="2.4" fill="#e0c040"/><rect x="77.5" y="19.8" width="9.0" height="2.4" fill="#e0c040"/><rect x="80.5" y="24.8" width="3.0" height="2.4" fill="#e0c040"/><path d="M15.0 15.0L30.0 40.0L15.0 65.0L0.0 40.0Z" fill="#2a1a30"/><path d="M15.0 17.4L28.6 40.0L15.0 62.6L1.4 40.0Z" fill="#c08020"/><path d="M15.0 23.5L25.0 40.0L15.0 56.5L5.0 40.0Z" fill="#1a5a30"/><path d="M15.0 27.0L23.0 40.0L15.0 53.0L7.0 40.0Z" fill="#d8c040"/><path d="M15.0 28.0L18.5 33.5L15.0 39.0L11.5 33.5Z" fill="#1a5a30"/><path d="M15.0 41.0L18.5 46.5L15.0 52.0L11.5 46.5Z" fill="#1a5a30"/><path d="M11.0 34.5L14.5 40.0L11.0 45.5L7.5 40.0Z" fill="#1a5a30"/><path d="M19.0 34.5L22.5 40.0L19.0 45.5L15.5 40.0Z" fill="#1a5a30"/><path d="M42.5 15.0L57.5 40.0L42.5 65.0L27.5 40.0Z" fill="#2a1a30"/><path d="M42.5 17.4L56.1 40.0L42.5 62.6L28.9 40.0Z" fill="#d86020"/><path d="M42.5 23.5L52.5 40.0L42.5 56.5L32.5 40.0Z" fill="#e8b030"/><path d="M42.5 29.5L49.0 40.0L42.5 50.5L36.0 40.0Z" fill="#c02a20"/><path d="M42.5 36.0L45.0 40.0L42.5 44.0L40.0 40.0Z" fill="#e8b030"/><path d="M72.6 15.0L87.6 40.0L72.6 65.0L57.6 40.0Z" fill="#2a1a30"/><path d="M72.6 17.4L86.2 40.0L72.6 62.6L59.0 40.0Z" fill="#6a3aa0"/><path d="M72.6 23.5L82.6 40.0L72.6 56.5L62.6 40.0Z" fill="#e0c040"/><path d="M72.6 27.5L80.1 40.0L72.6 52.5L65.1 40.0Z" fill="#4a2a80"/><rect x="71.1" y="28.8" width="3.0" height="2.4" fill="#e0c040"/><rect x="68.1" y="33.8" width="9.0" height="2.4" fill="#e0c040"/><rect x="65.1" y="38.8" width="15.0" height="2.4" fill="#e0c040"/><rect x="68.1" y="43.8" width="9.0" height="2.4" fill="#e0c040"/><rect x="71.1" y="48.8" width="3.0" height="2.4" fill="#e0c040"/><path d="M-12.0 15.0L3.0 40.0L-12.0 65.0L-27.0 40.0Z" fill="#2a1a30"/><path d="M-12.0 17.4L1.6 40.0L-12.0 62.6L-25.6 40.0Z" fill="#b02a2a"/><path d="M-12.0 23.5L-2.0 40.0L-12.0 56.5L-22.0 40.0Z" fill="#e0b030"/><path d="M-12.0 29.5L-5.5 40.0L-12.0 50.5L-18.5 40.0Z" fill="#2a6a3a"/><path d="M-12.0 36.0L-9.5 40.0L-12.0 44.0L-14.5 40.0Z" fill="#e0b030"/><path d="M5.0 37.0L20.0 62.0L5.0 87.0L-10.0 62.0Z" fill="#2a1a30"/><path d="M5.0 39.4L18.6 62.0L5.0 84.6L-8.6 62.0Z" fill="#d0a030"/><path d="M5.0 45.5L15.0 62.0L5.0 78.5L-5.0 62.0Z" fill="#40b0c0"/><path d="M5.0 51.5L11.5 62.0L5.0 72.5L-1.5 62.0Z" fill="#e0c040"/><path d="M5.0 58.0L7.5 62.0L5.0 66.0L2.5 62.0Z" fill="#40b0c0"/><path d="M29.0 37.0L44.0 62.0L29.0 87.0L14.0 62.0Z" fill="#2a1a30"/><path d="M29.0 39.4L42.6 62.0L29.0 84.6L15.4 62.0Z" fill="#4a2a70"/><path d="M29.0 45.5L39.0 62.0L29.0 78.5L19.0 62.0Z" fill="#30a8c0"/><path d="M29.0 49.0L37.0 62.0L29.0 75.0L21.0 62.0Z" fill="#e0c040"/><path d="M29.0 50.0L32.5 55.5L29.0 61.0L25.5 55.5Z" fill="#30a8c0"/><path d="M29.0 63.0L32.5 68.5L29.0 74.0L25.5 68.5Z" fill="#30a8c0"/><path d="M25.0 56.5L28.5 62.0L25.0 67.5L21.5 62.0Z" fill="#30a8c0"/><path d="M33.0 56.5L36.5 62.0L33.0 67.5L29.5 62.0Z" fill="#30a8c0"/><path d="M57.0 37.0L72.0 62.0L57.0 87.0L42.0 62.0Z" fill="#2a1a30"/><path d="M57.0 39.4L70.6 62.0L57.0 84.6L43.4 62.0Z" fill="#e06020"/><path d="M57.0 45.5L67.0 62.0L57.0 78.5L47.0 62.0Z" fill="#e8b830"/><path d="M57.0 51.5L63.5 62.0L57.0 72.5L50.5 62.0Z" fill="#b02020"/><path d="M57.0 58.0L59.5 62.0L57.0 66.0L54.5 62.0Z" fill="#e8b830"/><path d="M82.0 37.0L97.0 62.0L82.0 87.0L67.0 62.0Z" fill="#2a1a30"/><path d="M82.0 39.4L95.6 62.0L82.0 84.6L68.4 62.0Z" fill="#a02a2a"/><path d="M82.0 45.5L92.0 62.0L82.0 78.5L72.0 62.0Z" fill="#d8c040"/><path d="M82.0 51.5L88.5 62.0L82.0 72.5L75.5 62.0Z" fill="#a8a030"/><path d="M82.0 58.0L84.5 62.0L82.0 66.0L79.5 62.0Z" fill="#d8c040"/><path d="M15.0 64.0L30.0 89.0L15.0 114.0L0.0 89.0Z" fill="#2a1a30"/><path d="M15.0 66.4L28.6 89.0L15.0 111.6L1.4 89.0Z" fill="#e0a030"/><path d="M15.0 72.5L25.0 89.0L15.0 105.5L5.0 89.0Z" fill="#2a90a8"/><path d="M15.0 76.5L22.5 89.0L15.0 101.5L7.5 89.0Z" fill="#c02a2a"/><rect x="13.5" y="77.8" width="3.0" height="2.4" fill="#30a0b0"/><rect x="10.5" y="82.8" width="9.0" height="2.4" fill="#30a0b0"/><rect x="7.5" y="87.8" width="15.0" height="2.4" fill="#30a0b0"/><rect x="10.5" y="92.8" width="9.0" height="2.4" fill="#30a0b0"/><rect x="13.5" y="97.8" width="3.0" height="2.4" fill="#30a0b0"/><path d="M42.5 64.0L57.5 89.0L42.5 114.0L27.5 89.0Z" fill="#2a1a30"/><path d="M42.5 66.4L56.1 89.0L42.5 111.6L28.9 89.0Z" fill="#30b8c8"/><path d="M42.5 72.5L52.5 89.0L42.5 105.5L32.5 89.0Z" fill="#c06020"/><path d="M42.5 78.5L49.0 89.0L42.5 99.5L36.0 89.0Z" fill="#5a4ac0"/><path d="M42.5 85.0L45.0 89.0L42.5 93.0L40.0 89.0Z" fill="#c06020"/><path d="M72.6 64.0L87.6 89.0L72.6 114.0L57.6 89.0Z" fill="#2a1a30"/><path d="M72.6 66.4L86.2 89.0L72.6 111.6L59.0 89.0Z" fill="#1a4a2a"/><path d="M72.6 72.5L82.6 89.0L72.6 105.5L62.6 89.0Z" fill="#30b8c0"/><path d="M72.6 76.0L80.6 89.0L72.6 102.0L64.6 89.0Z" fill="#b02a2a"/><path d="M65.6 87L79.6 87L72.6 98Z" fill="#40c0c8"/><path d="M-12.0 64.0L3.0 89.0L-12.0 114.0L-27.0 89.0Z" fill="#2a1a30"/><path d="M-12.0 66.4L1.6 89.0L-12.0 111.6L-25.6 89.0Z" fill="#c02a2a"/><path d="M-12.0 72.5L-2.0 89.0L-12.0 105.5L-22.0 89.0Z" fill="#e0b030"/><path d="M-12.0 78.5L-5.5 89.0L-12.0 99.5L-18.5 89.0Z" fill="#2a6a3a"/><path d="M-12.0 85.0L-9.5 89.0L-12.0 93.0L-14.5 89.0Z" fill="#e0b030"/><path d="M5.0 88.0L20.0 113.0L5.0 138.0L-10.0 113.0Z" fill="#2a1a30"/><path d="M5.0 90.4L18.6 113.0L5.0 135.6L-8.6 113.0Z" fill="#b02a2a"/><path d="M5.0 96.5L15.0 113.0L5.0 129.5L-5.0 113.0Z" fill="#2a7a3a"/><path d="M5.0 100.5L12.5 113.0L5.0 125.5L-2.5 113.0Z" fill="#c02a2a"/><rect x="3.5" y="101.8" width="3.0" height="2.4" fill="#4a9a3a"/><rect x="0.5" y="106.8" width="9.0" height="2.4" fill="#4a9a3a"/><rect x="-2.5" y="111.8" width="15.0" height="2.4" fill="#4a9a3a"/><rect x="0.5" y="116.8" width="9.0" height="2.4" fill="#4a9a3a"/><rect x="3.5" y="121.8" width="3.0" height="2.4" fill="#4a9a3a"/><path d="M29.0 88.0L44.0 113.0L29.0 138.0L14.0 113.0Z" fill="#2a1a30"/><path d="M29.0 90.4L42.6 113.0L29.0 135.6L15.4 113.0Z" fill="#c02a2a"/><path d="M29.0 96.5L39.0 113.0L29.0 129.5L19.0 113.0Z" fill="#4a3aa0"/><path d="M29.0 100.0L37.0 113.0L29.0 126.0L21.0 113.0Z" fill="#6a4ac0"/><path d="M29.0 101.0L32.5 106.5L29.0 112.0L25.5 106.5Z" fill="#3a2a90"/><path d="M29.0 114.0L32.5 119.5L29.0 125.0L25.5 119.5Z" fill="#3a2a90"/><path d="M25.0 107.5L28.5 113.0L25.0 118.5L21.5 113.0Z" fill="#3a2a90"/><path d="M33.0 107.5L36.5 113.0L33.0 118.5L29.5 113.0Z" fill="#3a2a90"/><path d="M57.0 88.0L72.0 113.0L57.0 138.0L42.0 113.0Z" fill="#2a1a30"/><path d="M57.0 90.4L70.6 113.0L57.0 135.6L43.4 113.0Z" fill="#d0a030"/><path d="M57.0 96.5L67.0 113.0L57.0 129.5L47.0 113.0Z" fill="#8a6a20"/><path d="M57.0 100.0L65.0 113.0L57.0 126.0L49.0 113.0Z" fill="#6a4a20"/><path d="M57.0 101.0L60.5 106.5L57.0 112.0L53.5 106.5Z" fill="#a08030"/><path d="M57.0 114.0L60.5 119.5L57.0 125.0L53.5 119.5Z" fill="#a08030"/><path d="M53.0 107.5L56.5 113.0L53.0 118.5L49.5 113.0Z" fill="#a08030"/><path d="M61.0 107.5L64.5 113.0L61.0 118.5L57.5 113.0Z" fill="#a08030"/><path d="M82.0 88.0L97.0 113.0L82.0 138.0L67.0 113.0Z" fill="#2a1a30"/><path d="M82.0 90.4L95.6 113.0L82.0 135.6L68.4 113.0Z" fill="#30a8c0"/><path d="M82.0 96.5L92.0 113.0L82.0 129.5L72.0 113.0Z" fill="#5a3a90"/><path d="M82.0 102.5L88.5 113.0L82.0 123.5L75.5 113.0Z" fill="#30a8c0"/><path d="M82.0 109.0L84.5 113.0L82.0 117.0L79.5 113.0Z" fill="#5a3a90"/><path d="M15.0 112.0L30.0 137.0L15.0 162.0L0.0 137.0Z" fill="#2a1a30"/><path d="M15.0 114.4L28.6 137.0L15.0 159.6L1.4 137.0Z" fill="#30a8c0"/><path d="M15.0 120.5L25.0 137.0L15.0 153.5L5.0 137.0Z" fill="#2a5a8a"/><path d="M15.0 126.5L21.5 137.0L15.0 147.5L8.5 137.0Z" fill="#c02a2a"/><path d="M15.0 133.0L17.5 137.0L15.0 141.0L12.5 137.0Z" fill="#2a5a8a"/><path d="M42.5 112.0L57.5 137.0L42.5 162.0L27.5 137.0Z" fill="#2a1a30"/><path d="M42.5 114.4L56.1 137.0L42.5 159.6L28.9 137.0Z" fill="#e0b030"/><path d="M42.5 120.5L52.5 137.0L42.5 153.5L32.5 137.0Z" fill="#b02a2a"/><path d="M42.5 126.5L49.0 137.0L42.5 147.5L36.0 137.0Z" fill="#2a6a3a"/><path d="M42.5 133.0L45.0 137.0L42.5 141.0L40.0 137.0Z" fill="#b02a2a"/><path d="M72.6 112.0L87.6 137.0L72.6 162.0L57.6 137.0Z" fill="#2a1a30"/><path d="M72.6 114.4L86.2 137.0L72.6 159.6L59.0 137.0Z" fill="#6a3aa0"/><path d="M72.6 120.5L82.6 137.0L72.6 153.5L62.6 137.0Z" fill="#30a8c0"/><path d="M72.6 126.5L79.1 137.0L72.6 147.5L66.1 137.0Z" fill="#2a2a6a"/><path d="M72.6 133.0L75.1 137.0L72.6 141.0L70.1 137.0Z" fill="#30a8c0"/></g><rect x="0.5" y="0.5" width="86" height="130" fill="none" stroke="#3a3a3a"/></svg>
<div class="a" style="left:109px;top:721px;width:87px;text-align:center;font-size:10px;color:#111;line-height:11px">Artistic.jpg</div>
<svg style="left:239px;top:620px;overflow:hidden" width="145" height="89" viewBox="0 0 145 89"><rect width="145" height="89" fill="#e4e0dc"/><path d="M1.5 12.0L15.5 24.5L1.5 37.0L-12.5 24.5Z" fill="#f0ece8"/><path d="M29.5 12.0L43.5 24.5L29.5 37.0L15.5 24.5Z" fill="#e6e0dc"/><path d="M57.5 12.0L71.5 24.5L57.5 37.0L43.5 24.5Z" fill="#dcd4cc"/><path d="M85.5 12.0L99.5 24.5L85.5 37.0L71.5 24.5Z" fill="#ece8e4"/><path d="M113.5 12.0L127.5 24.5L113.5 37.0L99.5 24.5Z" fill="#ece8e4"/><path d="M141.5 12.0L155.5 24.5L141.5 37.0L127.5 24.5Z" fill="#ece8e4"/><path d="M169.5 12.0L183.5 24.5L169.5 37.0L155.5 24.5Z" fill="#f0ece8"/><path d="M1.5 37.5L15.5 50.0L1.5 62.5L-12.5 50.0Z" fill="#ece8e4"/><path d="M29.5 37.5L43.5 50.0L29.5 62.5L15.5 50.0Z" fill="#e6e0dc"/><path d="M57.5 37.5L71.5 50.0L57.5 62.5L43.5 50.0Z" fill="#ece8e4"/><path d="M85.5 37.5L99.5 50.0L85.5 62.5L71.5 50.0Z" fill="#ece8e4"/><path d="M113.5 37.5L127.5 50.0L113.5 62.5L99.5 50.0Z" fill="#dcd4cc"/><path d="M141.5 37.5L155.5 50.0L141.5 62.5L127.5 50.0Z" fill="#dcd4cc"/><path d="M169.5 37.5L183.5 50.0L169.5 62.5L155.5 50.0Z" fill="#ece8e4"/><path d="M1.5 61.0L15.5 73.5L1.5 86.0L-12.5 73.5Z" fill="#e6e0dc"/><path d="M29.5 61.0L43.5 73.5L29.5 86.0L15.5 73.5Z" fill="#ece8e4"/><path d="M57.5 61.0L71.5 73.5L57.5 86.0L43.5 73.5Z" fill="#dcd4cc"/><path d="M85.5 61.0L99.5 73.5L85.5 86.0L71.5 73.5Z" fill="#ece8e4"/><path d="M113.5 61.0L127.5 73.5L113.5 86.0L99.5 73.5Z" fill="#ece8e4"/><path d="M141.5 61.0L155.5 73.5L141.5 86.0L127.5 73.5Z" fill="#e6e0dc"/><path d="M169.5 61.0L183.5 73.5L169.5 86.0L155.5 73.5Z" fill="#ece8e4"/><path d="M1.5 -13.5L15.5 -1.0L1.5 11.5L-12.5 -1.0Z" fill="#dcd4cc"/><path d="M29.5 -13.5L43.5 -1.0L29.5 11.5L15.5 -1.0Z" fill="#ece8e4"/><path d="M57.5 -13.5L71.5 -1.0L57.5 11.5L43.5 -1.0Z" fill="#e6e0dc"/><path d="M85.5 -13.5L99.5 -1.0L85.5 11.5L71.5 -1.0Z" fill="#ece8e4"/><path d="M113.5 -13.5L127.5 -1.0L113.5 11.5L99.5 -1.0Z" fill="#e6e0dc"/><path d="M141.5 -13.5L155.5 -1.0L141.5 11.5L127.5 -1.0Z" fill="#f0ece8"/><path d="M169.5 -13.5L183.5 -1.0L169.5 11.5L155.5 -1.0Z" fill="#dcd4cc"/><path d="M16.7 -1.2L30.7 11.2L16.7 23.8L2.7 11.2Z" fill="#1a7a6a"/><path d="M47.2 -1.2L61.2 11.2L47.2 23.8L33.2 11.2Z" fill="#2a8a60"/><path d="M77.7 -1.2L91.7 11.2L77.7 23.8L63.7 11.2Z" fill="#2a9a70"/><path d="M106.6 -1.2L120.6 11.2L106.6 23.8L92.6 11.2Z" fill="#1a8a8a"/><path d="M134.0 -1.2L148.0 11.2L134.0 23.8L120.0 11.2Z" fill="#60b8c8"/><path d="M-8.0 25.3L6.0 37.8L-8.0 50.3L-22.0 37.8Z" fill="#1a1a1a"/><path d="M19.8 25.3L33.8 37.8L19.8 50.3L5.8 37.8Z" fill="#1a8a9a"/><path d="M48.8 25.3L62.8 37.8L48.8 50.3L34.8 37.8Z" fill="#181818"/><path d="M76.9 25.3L90.9 37.8L76.9 50.3L62.9 37.8Z" fill="#151520"/><path d="M105.0 25.3L119.0 37.8L105.0 50.3L91.0 37.8Z" fill="#101820"/><path d="M132.3 25.3L146.3 37.8L132.3 50.3L118.3 37.8Z" fill="#181818"/><path d="M-6.0 50.3L8.0 62.8L-6.0 75.3L-20.0 62.8Z" fill="#181818"/><path d="M22.2 50.3L36.2 62.8L22.2 75.3L8.2 62.8Z" fill="#2a7a5a"/><path d="M49.5 50.3L63.5 62.8L49.5 75.3L35.5 62.8Z" fill="#151a28"/><path d="M75.3 50.3L89.3 62.8L75.3 75.3L61.3 62.8Z" fill="#8a7a3a"/><path d="M102.7 50.3L116.7 62.8L102.7 75.3L88.7 62.8Z" fill="#7a4a2a"/><path d="M129.2 50.3L143.2 62.8L129.2 75.3L115.2 62.8Z" fill="#8a6a20"/><path d="M150.0 50.3L164.0 62.8L150.0 75.3L136.0 62.8Z" fill="#222"/><path d="M-4.0 72.2L10.0 84.7L-4.0 97.2L-18.0 84.7Z" fill="#222228"/><path d="M23.8 72.2L37.8 84.7L23.8 97.2L9.8 84.7Z" fill="#2a8a80"/><path d="M51.1 72.2L65.1 84.7L51.1 97.2L37.1 84.7Z" fill="#2a3a5a"/><path d="M76.0 72.2L90.0 84.7L76.0 97.2L62.0 84.7Z" fill="#8a6a4a"/><path d="M101.9 72.2L115.9 84.7L101.9 97.2L87.9 84.7Z" fill="#2a2a30"/><path d="M126.9 72.2L140.9 84.7L126.9 97.2L112.9 84.7Z" fill="#151515"/><path d="M14.0 -26.5L28.0 -14.0L14.0 -1.5L0.0 -14.0Z" fill="#d8d0c8"/><path d="M44.0 -26.5L58.0 -14.0L44.0 -1.5L30.0 -14.0Z" fill="#1a6a5a"/><path d="M74.0 -26.5L88.0 -14.0L74.0 -1.5L60.0 -14.0Z" fill="#e0d8d0"/><path d="M104.0 -26.5L118.0 -14.0L104.0 -1.5L90.0 -14.0Z" fill="#1a6a6a"/></svg>
<div class="a" style="left:239px;top:712px;width:145px;text-align:center;font-size:10px;color:#151515;line-height:11px">Design.jpg</div>
<svg style="left:398px;top:620px;overflow:hidden" width="145" height="83" viewBox="0 0 145 83"><defs><linearGradient id="ge" x1="0" y1="0" x2="0" y2="1"><stop offset="0" stop-color="#8a9078"/><stop offset="0.25" stop-color="#b0a898"/><stop offset="0.5" stop-color="#c0b4a4"/><stop offset="1" stop-color="#cabcaa"/></linearGradient><filter id="eb"><feGaussianBlur stdDeviation="2.2"/></filter><filter id="eh"><feGaussianBlur stdDeviation="1.4"/></filter></defs><rect width="145" height="83" fill="url(#ge)"/>
<g filter="url(#eb)"><rect x="0" y="-4" width="45" height="16" fill="#5a7048"/><rect x="95" y="-4" width="50" height="36" fill="#56604a"/><ellipse cx="22" cy="38" rx="26" ry="14" fill="#a89886"/><path d="M0 58C15 54 28 62 38 83H0Z" fill="#a88462"/><ellipse cx="60" cy="52" rx="14" ry="4" fill="#7aa060" opacity="0.6"/><ellipse cx="120" cy="26" rx="7" ry="6" fill="#6a6058"/></g>
<g filter="url(#eh)"><ellipse cx="73" cy="16" rx="26" ry="24" fill="#3a3634"/><rect x="64" y="38" width="27" height="45" fill="#4a4440"/></g>
<path d="M60 22C66 28 70 26 72 20C74 26 78 28 84 22C85 32 80 41 72 43C64 41 59 32 60 22Z" fill="#ececea"/>
<circle cx="65" cy="33" r="2.2" fill="#111"/><circle cx="78" cy="33" r="2.2" fill="#111"/>
</svg>
<div class="a" style="left:398px;top:706px;width:145px;text-align:center;font-size:10px;color:#151515;line-height:11px">Emu.jpg</div>
<svg style="left:587px;top:620px;overflow:hidden" width="85" height="100" viewBox="0 0 85 100"><rect width="85" height="100" fill="#5a7a48"/><rect x="0" y="0" width="35" height="25" fill="#a8c098"/><rect x="0" y="12" width="30" height="12" fill="#d8d0d8"/><rect x="55" y="0" width="30" height="32" fill="#7a4a70"/><ellipse cx="72" cy="20" rx="12" ry="6" fill="#9a5a88"/><ellipse cx="40" cy="15" rx="10" ry="9" fill="#d02028"/><ellipse cx="28" cy="5" rx="6" ry="5" fill="#c82030"/><ellipse cx="10" cy="30" rx="9" ry="8" fill="#c81a28"/><ellipse cx="25" cy="28" rx="5" ry="8" fill="#f0c030"/><ellipse cx="50" cy="32" rx="8" ry="7" fill="#c02030"/><ellipse cx="65" cy="35" rx="8" ry="5" fill="#c83040"/><ellipse cx="80" cy="38" rx="6" ry="6" fill="#e8a040"/><ellipse cx="5" cy="50" rx="5" ry="6" fill="#d02030"/><ellipse cx="23" cy="41" rx="17" ry="10" fill="#e0b080"/><ellipse cx="23" cy="41" rx="9" ry="5" fill="#f0d8b0"/><ellipse cx="17" cy="57" rx="8" ry="7" fill="#d02838"/><circle cx="10.7" cy="68.2" r="3.8" fill="#4a8a30"/><circle cx="35.6" cy="88.6" r="3.8" fill="#5aa040"/><circle cx="36.9" cy="87.0" r="3.8" fill="#4a8a30"/><circle cx="7.8" cy="89.6" r="3.8" fill="#5aa040"/><circle cx="39.1" cy="81.9" r="3.8" fill="#8ac858"/><circle cx="48.6" cy="80.8" r="3.8" fill="#8ac858"/><circle cx="23.7" cy="72.9" r="3.8" fill="#78b850"/><circle cx="43.9" cy="72.8" r="3.8" fill="#4a8a30"/><circle cx="33.5" cy="95.5" r="3.8" fill="#8ac858"/><circle cx="19.3" cy="99.3" r="3.8" fill="#5aa040"/><circle cx="32.7" cy="69.9" r="3.8" fill="#4a8a30"/><circle cx="11.1" cy="81.6" r="3.8" fill="#5aa040"/><circle cx="59.7" cy="66.8" r="3.8" fill="#4a8a30"/><circle cx="22.4" cy="76.6" r="3.8" fill="#8ac858"/><circle cx="36.8" cy="80.4" r="3.8" fill="#5aa040"/><circle cx="58.7" cy="81.1" r="3.8" fill="#5aa040"/><circle cx="5.6" cy="89.3" r="3.8" fill="#8ac858"/><circle cx="19.1" cy="77.9" r="3.8" fill="#4a8a30"/><circle cx="3.4" cy="80.6" r="3.8" fill="#78b850"/><circle cx="38.7" cy="81.8" r="3.8" fill="#78b850"/><circle cx="48.1" cy="68.7" r="3.8" fill="#78b850"/><circle cx="25.9" cy="97.0" r="3.8" fill="#8ac858"/><circle cx="6.8" cy="80.2" r="3.8" fill="#4a8a30"/><circle cx="55.0" cy="93.5" r="3.8" fill="#4a8a30"/><circle cx="44.4" cy="99.5" r="3.8" fill="#8ac858"/><circle cx="59.5" cy="69.4" r="3.8" fill="#78b850"/><circle cx="11.1" cy="87.7" r="3.8" fill="#5aa040"/><circle cx="31.1" cy="85.2" r="3.8" fill="#4a8a30"/><circle cx="18.9" cy="69.2" r="3.8" fill="#4a8a30"/><circle cx="38.6" cy="75.5" r="3.8" fill="#78b850"/><circle cx="43.4" cy="82.6" r="3.8" fill="#5aa040"/><circle cx="29.4" cy="95.4" r="3.8" fill="#8ac858"/><circle cx="25.9" cy="78.2" r="3.8" fill="#8ac858"/><circle cx="40.1" cy="66.2" r="3.8" fill="#5aa040"/><circle cx="61.1" cy="79.9" r="3.8" fill="#5aa040"/><circle cx="22.4" cy="65.9" r="3.8" fill="#5aa040"/><circle cx="36.0" cy="83.3" r="3.8" fill="#4a8a30"/><circle cx="38.8" cy="66.5" r="3.8" fill="#78b850"/><circle cx="38.8" cy="69.3" r="3.8" fill="#4a8a30"/><circle cx="59.3" cy="85.7" r="3.8" fill="#8ac858"/><circle cx="9.4" cy="94.6" r="3.8" fill="#8ac858"/><circle cx="30.8" cy="75.2" r="3.8" fill="#78b850"/><circle cx="8.1" cy="76.3" r="3.8" fill="#4a8a30"/><circle cx="30.7" cy="88.9" r="3.8" fill="#5aa040"/><circle cx="14.3" cy="98.3" r="3.8" fill="#4a8a30"/><ellipse cx="56" cy="60" rx="27" ry="26" fill="#30b8d8"/><ellipse cx="56" cy="60" rx="20" ry="18" fill="#c02a2a"/><circle cx="44.7" cy="61.2" r="2" fill="#e04040"/><circle cx="40.9" cy="60.8" r="2" fill="#e04040"/><circle cx="71.3" cy="70.2" r="2" fill="#e04040"/><circle cx="62.3" cy="53.3" r="2" fill="#e04040"/><circle cx="51.7" cy="50.7" r="2" fill="#e04040"/><circle cx="64.7" cy="60.9" r="2" fill="#e04040"/><circle cx="64.9" cy="55.2" r="2" fill="#e04040"/><circle cx="47.1" cy="68.7" r="2" fill="#e04040"/><circle cx="71.5" cy="69.9" r="2" fill="#e04040"/><circle cx="65.8" cy="68.9" r="2" fill="#e04040"/><circle cx="63.7" cy="52.3" r="2" fill="#e04040"/><circle cx="56.6" cy="56.0" r="2" fill="#e04040"/><circle cx="40.9" cy="46.8" r="2" fill="#e04040"/><circle cx="48.9" cy="53.3" r="2" fill="#e04040"/><circle cx="62.2" cy="72.8" r="2" fill="#e04040"/><circle cx="54.3" cy="72.2" r="2" fill="#e04040"/><circle cx="71.6" cy="72.7" r="2" fill="#e04040"/><circle cx="51.7" cy="52.2" r="2" fill="#e04040"/><circle cx="47.3" cy="51.5" r="2" fill="#e04040"/><circle cx="46.5" cy="63.5" r="2" fill="#e04040"/><circle cx="68.8" cy="69.5" r="2" fill="#e04040"/><circle cx="55.3" cy="64.3" r="2" fill="#e04040"/><circle cx="65.6" cy="48.4" r="2" fill="#e04040"/><circle cx="61.1" cy="71.5" r="2" fill="#e04040"/><circle cx="65.0" cy="67.0" r="2" fill="#e04040"/><circle cx="55.3" cy="51.0" r="2" fill="#e04040"/><circle cx="65.3" cy="55.3" r="2" fill="#e04040"/><circle cx="65.6" cy="73.2" r="2" fill="#e04040"/><circle cx="52.7" cy="57.2" r="2" fill="#e04040"/><circle cx="70.3" cy="66.3" r="2" fill="#e04040"/><path d="M0 70L14 68L12 95H0Z" fill="#5a9a48"/><ellipse cx="79" cy="89" rx="8" ry="12" fill="#e8b030"/><rect x="64" y="88" width="9" height="12" fill="#3050b0"/></svg>
<div class="a" style="left:586px;top:722px;width:86px;text-align:center;font-size:10px;color:#151515;line-height:11px">Fresh.jpg</div>
<svg style="left:740px;top:620px;overflow:hidden" width="96" height="100" viewBox="0 0 96 100"><rect width="96" height="100" fill="#5aa050"/><ellipse cx="42.5" cy="56.6" rx="11" ry="7.5" fill="#a4d890" stroke="#3e8a3e" stroke-width="0.9" transform="rotate(166 42.5 56.6)"/><ellipse cx="42.4" cy="89.1" rx="11" ry="7.5" fill="#90cc80" stroke="#3e8a3e" stroke-width="0.9" transform="rotate(34 42.4 89.1)"/><ellipse cx="45.0" cy="62.5" rx="11" ry="7.5" fill="#a4d890" stroke="#3e8a3e" stroke-width="0.9" transform="rotate(34 45.0 62.5)"/><ellipse cx="26.9" cy="5.0" rx="11" ry="7.5" fill="#8ccc78" stroke="#3e8a3e" stroke-width="0.9" transform="rotate(146 26.9 5.0)"/><ellipse cx="57.5" cy="38.6" rx="11" ry="7.5" fill="#90cc80" stroke="#3e8a3e" stroke-width="0.9" transform="rotate(82 57.5 38.6)"/><ellipse cx="63.3" cy="63.5" rx="11" ry="7.5" fill="#8ccc78" stroke="#3e8a3e" stroke-width="0.9" transform="rotate(150 63.3 63.5)"/><ellipse cx="1.3" cy="15.9" rx="11" ry="7.5" fill="#8ccc78" stroke="#3e8a3e" stroke-width="0.9" transform="rotate(44 1.3 15.9)"/><ellipse cx="76.7" cy="30.9" rx="11" ry="7.5" fill="#9ad488" stroke="#3e8a3e" stroke-width="0.9" transform="rotate(106 76.7 30.9)"/><ellipse cx="49.5" cy="65.4" rx="11" ry="7.5" fill="#8ccc78" stroke="#3e8a3e" stroke-width="0.9" transform="rotate(90 49.5 65.4)"/><ellipse cx="43.0" cy="25.6" rx="11" ry="7.5" fill="#8ccc78" stroke="#3e8a3e" stroke-width="0.9" transform="rotate(180 43.0 25.6)"/><ellipse cx="69.3" cy="29.7" rx="11" ry="7.5" fill="#84c474" stroke="#3e8a3e" stroke-width="0.9" transform="rotate(41 69.3 29.7)"/><ellipse cx="-1.9" cy="56.9" rx="11" ry="7.5" fill="#8ccc78" stroke="#3e8a3e" stroke-width="0.9" transform="rotate(19 -1.9 56.9)"/><ellipse cx="83.9" cy="37.5" rx="11" ry="7.5" fill="#8ccc78" stroke="#3e8a3e" stroke-width="0.9" transform="rotate(172 83.9 37.5)"/><ellipse cx="17.4" cy="97.0" rx="11" ry="7.5" fill="#a4d890" stroke="#3e8a3e" stroke-width="0.9" transform="rotate(9 17.4 97.0)"/><ellipse cx="97.9" cy="38.7" rx="11" ry="7.5" fill="#9ad488" stroke="#3e8a3e" stroke-width="0.9" transform="rotate(13 97.9 38.7)"/><ellipse cx="76.7" cy="24.7" rx="11" ry="7.5" fill="#84c474" stroke="#3e8a3e" stroke-width="0.9" transform="rotate(16 76.7 24.7)"/><ellipse cx="-3.4" cy="40.1" rx="11" ry="7.5" fill="#9ad488" stroke="#3e8a3e" stroke-width="0.9" transform="rotate(166 -3.4 40.1)"/><ellipse cx="20.9" cy="6.1" rx="11" ry="7.5" fill="#a4d890" stroke="#3e8a3e" stroke-width="0.9" transform="rotate(11 20.9 6.1)"/><ellipse cx="13.7" cy="56.5" rx="11" ry="7.5" fill="#9ad488" stroke="#3e8a3e" stroke-width="0.9" transform="rotate(81 13.7 56.5)"/><ellipse cx="98.5" cy="79.6" rx="11" ry="7.5" fill="#a4d890" stroke="#3e8a3e" stroke-width="0.9" transform="rotate(75 98.5 79.6)"/><ellipse cx="7.2" cy="41.3" rx="11" ry="7.5" fill="#84c474" stroke="#3e8a3e" stroke-width="0.9" transform="rotate(38 7.2 41.3)"/><ellipse cx="85.8" cy="102.2" rx="11" ry="7.5" fill="#8ccc78" stroke="#3e8a3e" stroke-width="0.9" transform="rotate(107 85.8 102.2)"/><ellipse cx="17.1" cy="38.4" rx="11" ry="7.5" fill="#90cc80" stroke="#3e8a3e" stroke-width="0.9" transform="rotate(154 17.1 38.4)"/><ellipse cx="5.5" cy="103.8" rx="11" ry="7.5" fill="#84c474" stroke="#3e8a3e" stroke-width="0.9" transform="rotate(38 5.5 103.8)"/><ellipse cx="-4.0" cy="62.1" rx="11" ry="7.5" fill="#a4d890" stroke="#3e8a3e" stroke-width="0.9" transform="rotate(149 -4.0 62.1)"/><ellipse cx="2.7" cy="4.9" rx="11" ry="7.5" fill="#9ad488" stroke="#3e8a3e" stroke-width="0.9" transform="rotate(105 2.7 4.9)"/><ellipse cx="-3.4" cy="35.6" rx="11" ry="7.5" fill="#9ad488" stroke="#3e8a3e" stroke-width="0.9" transform="rotate(112 -3.4 35.6)"/><ellipse cx="95.7" cy="48.2" rx="11" ry="7.5" fill="#a4d890" stroke="#3e8a3e" stroke-width="0.9" transform="rotate(103 95.7 48.2)"/><ellipse cx="14.2" cy="12.0" rx="11" ry="7.5" fill="#90cc80" stroke="#3e8a3e" stroke-width="0.9" transform="rotate(164 14.2 12.0)"/><ellipse cx="21.2" cy="15.9" rx="11" ry="7.5" fill="#90cc80" stroke="#3e8a3e" stroke-width="0.9" transform="rotate(133 21.2 15.9)"/><ellipse cx="15.6" cy="99.5" rx="11" ry="7.5" fill="#90cc80" stroke="#3e8a3e" stroke-width="0.9" transform="rotate(159 15.6 99.5)"/><ellipse cx="3.2" cy="0.2" rx="11" ry="7.5" fill="#90cc80" stroke="#3e8a3e" stroke-width="0.9" transform="rotate(20 3.2 0.2)"/><ellipse cx="96.1" cy="21.2" rx="11" ry="7.5" fill="#84c474" stroke="#3e8a3e" stroke-width="0.9" transform="rotate(127 96.1 21.2)"/><ellipse cx="39.2" cy="94.5" rx="11" ry="7.5" fill="#90cc80" stroke="#3e8a3e" stroke-width="0.9" transform="rotate(88 39.2 94.5)"/><ellipse cx="13.4" cy="74.2" rx="11" ry="7.5" fill="#9ad488" stroke="#3e8a3e" stroke-width="0.9" transform="rotate(12 13.4 74.2)"/><ellipse cx="45.3" cy="66.9" rx="11" ry="7.5" fill="#8ccc78" stroke="#3e8a3e" stroke-width="0.9" transform="rotate(111 45.3 66.9)"/><ellipse cx="24.4" cy="95.9" rx="11" ry="7.5" fill="#8ccc78" stroke="#3e8a3e" stroke-width="0.9" transform="rotate(37 24.4 95.9)"/><ellipse cx="2.3" cy="40.3" rx="11" ry="7.5" fill="#8ccc78" stroke="#3e8a3e" stroke-width="0.9" transform="rotate(45 2.3 40.3)"/><ellipse cx="13.5" cy="35.6" rx="11" ry="7.5" fill="#9ad488" stroke="#3e8a3e" stroke-width="0.9" transform="rotate(103 13.5 35.6)"/><ellipse cx="4.7" cy="10.2" rx="11" ry="7.5" fill="#84c474" stroke="#3e8a3e" stroke-width="0.9" transform="rotate(81 4.7 10.2)"/><ellipse cx="64.0" cy="71.0" rx="11" ry="7.5" fill="#9ad488" stroke="#3e8a3e" stroke-width="0.9" transform="rotate(105 64.0 71.0)"/><ellipse cx="56.9" cy="96.6" rx="11" ry="7.5" fill="#84c474" stroke="#3e8a3e" stroke-width="0.9" transform="rotate(85 56.9 96.6)"/><ellipse cx="68.6" cy="100.9" rx="11" ry="7.5" fill="#8ccc78" stroke="#3e8a3e" stroke-width="0.9" transform="rotate(4 68.6 100.9)"/><ellipse cx="45.6" cy="75.4" rx="11" ry="7.5" fill="#8ccc78" stroke="#3e8a3e" stroke-width="0.9" transform="rotate(57 45.6 75.4)"/><ellipse cx="2.9" cy="55.1" rx="11" ry="7.5" fill="#9ad488" stroke="#3e8a3e" stroke-width="0.9" transform="rotate(133 2.9 55.1)"/><ellipse cx="78.3" cy="95.7" rx="11" ry="7.5" fill="#a4d890" stroke="#3e8a3e" stroke-width="0.9" transform="rotate(63 78.3 95.7)"/><ellipse cx="89.6" cy="90.8" rx="11" ry="7.5" fill="#8ccc78" stroke="#3e8a3e" stroke-width="0.9" transform="rotate(75 89.6 90.8)"/><ellipse cx="85.7" cy="58.0" rx="11" ry="7.5" fill="#a4d890" stroke="#3e8a3e" stroke-width="0.9" transform="rotate(112 85.7 58.0)"/><ellipse cx="34.8" cy="-3.6" rx="11" ry="7.5" fill="#8ccc78" stroke="#3e8a3e" stroke-width="0.9" transform="rotate(13 34.8 -3.6)"/><ellipse cx="62.1" cy="104.3" rx="11" ry="7.5" fill="#84c474" stroke="#3e8a3e" stroke-width="0.9" transform="rotate(158 62.1 104.3)"/><ellipse cx="35.8" cy="75.9" rx="11" ry="7.5" fill="#a4d890" stroke="#3e8a3e" stroke-width="0.9" transform="rotate(105 35.8 75.9)"/><ellipse cx="43.6" cy="54.5" rx="11" ry="7.5" fill="#90cc80" stroke="#3e8a3e" stroke-width="0.9" transform="rotate(93 43.6 54.5)"/><ellipse cx="-1.9" cy="61.1" rx="11" ry="7.5" fill="#9ad488" stroke="#3e8a3e" stroke-width="0.9" transform="rotate(87 -1.9 61.1)"/><ellipse cx="95.5" cy="7.4" rx="11" ry="7.5" fill="#a4d890" stroke="#3e8a3e" stroke-width="0.9" transform="rotate(140 95.5 7.4)"/><ellipse cx="21.9" cy="-3.8" rx="11" ry="7.5" fill="#90cc80" stroke="#3e8a3e" stroke-width="0.9" transform="rotate(54 21.9 -3.8)"/><ellipse cx="16.3" cy="13.7" rx="11" ry="7.5" fill="#a4d890" stroke="#3e8a3e" stroke-width="0.9" transform="rotate(163 16.3 13.7)"/><ellipse cx="47.3" cy="21.6" rx="11" ry="7.5" fill="#84c474" stroke="#3e8a3e" stroke-width="0.9" transform="rotate(73 47.3 21.6)"/><ellipse cx="15.8" cy="42.4" rx="11" ry="7.5" fill="#9ad488" stroke="#3e8a3e" stroke-width="0.9" transform="rotate(145 15.8 42.4)"/><ellipse cx="87.4" cy="37.3" rx="11" ry="7.5" fill="#84c474" stroke="#3e8a3e" stroke-width="0.9" transform="rotate(105 87.4 37.3)"/><ellipse cx="17.0" cy="9.8" rx="11" ry="7.5" fill="#8ccc78" stroke="#3e8a3e" stroke-width="0.9" transform="rotate(63 17.0 9.8)"/></svg>
<div class="a" style="left:740px;top:722px;width:96px;text-align:center;font-size:10px;color:#151515;line-height:11px">Green.jpg</div>
<div class="a" style="left:843px;top:576px;width:22px;height:160px;background:linear-gradient(90deg,rgba(0,0,0,0),rgba(0,0,0,.38))"></div>
<div id="orgscroll" class="a"></div>
<div class="a" style="left:86px;top:738px;width:253px;height:9px;background:#7a7a7a"></div>
<div class="a" style="left:339px;top:738px;width:518px;height:9px;background:#3a3a3a"></div>
<svg style="left:78px;top:738px" width="5" height="9" viewBox="0 0 5 9"><path d="M4.5 0.5L0.5 4.5L4.5 8.5" stroke="#777" fill="none"/></svg>
<svg style="left:857px;top:738px" width="5" height="9" viewBox="0 0 5 9"><path d="M0.5 0.5L4.5 4.5L0.5 8.5" stroke="#777" fill="none"/></svg>
<div id="rightbg" class="a"></div>
<div id="mat" class="a"></div>
<div class="grip" style="left:872px;top:152px;height:24px;width:4px"></div>
<div class="ptitle" style="left:880px;top:152px">Материалы</div>
<svg style="left:1053px;top:156px" width="60" height="9" viewBox="0 0 60 9"><rect x="0.6" y="0.6" width="8.5" height="7.8" fill="none" stroke="#ddd" stroke-width="1.2"/><path d="M19 3.5H24L21.5 6Z" fill="#ddd"/><path d="M36 0.6H41.5M37 0.6V4.5M40.5 0.6V4.5M35 5H42.5M38.75 5V9" stroke="#ddd" stroke-width="1.2" fill="none"/><path d="M52 0.5L60 8.5M60 0.5L52 8.5" stroke="#ddd" stroke-width="1.3"/></svg>
<!-- materials tabs partly visible -->
<div class="a" style="left:884px;top:177px;width:22px;height:6px;background:#c8c8c8"></div>
<div class="a" style="left:906px;top:177px;width:22px;height:6px;background:#3a3a3a"></div>
<div class="a" style="left:930px;top:177px;width:22px;height:6px;background:#333"></div>
<!-- background swatch -->
<div class="a" style="left:1020px;top:251px;width:59px;height:59px;background:#a8a8a8;border:1px solid #ddd"></div>
<div class="a" style="left:1021px;top:252px;width:57px;height:38px;background:#fff"></div>
<div class="a" style="left:1029px;top:292px;width:13px;height:14px;background:#555;border:1px solid #111"></div>
<div class="a" style="left:1043px;top:292px;width:13px;height:14px;background:linear-gradient(135deg,#fff,#bbb 50%,#fff);border:1px solid #111"></div>
<div class="a" style="left:1060px;top:292px;width:14px;height:14px;background:repeating-conic-gradient(#000 0 25%,#fff 0 50%) 0 0/4px 4px;border:1px solid #111"></div>
<!-- foreground swatch -->
<div class="a" style="left:1020px;top:205px;width:28px;height:59px;background:#a8a8a8;border:1px solid #eee"></div>
<div class="a" style="left:1021px;top:206px;width:26px;height:39px;background:#000"></div>
<div class="a" style="left:1034px;top:247px;width:11px;height:13px;background:repeating-conic-gradient(#000 0 25%,#fff 0 50%) 0 0/4px 4px;border:1px solid #222"></div>
<div class="a" style="left:1052px;top:211px;width:16px;height:16px;background:#000"></div>
<div class="a" style="left:1050px;top:230px;width:10px;height:10px;background:#ccc;border:1px solid #eee"></div>
<svg style="left:1051px;top:231px" width="8" height="8" viewBox="0 0 8 8"><path d="M1 1V6H7" stroke="#000" stroke-width="1.2" fill="none"/></svg>
<div class="a" style="left:1063px;top:226px;width:16px;height:16px;background:#fff"></div>
<div class="a" style="left:1033px;top:362px;width:2px;height:4px;background:#eee"></div>
<div class="a" style="left:1020px;top:380px;width:84px;height:1px;background:#555"></div>
<div class="a" style="left:1020px;top:405px;width:84px;height:1px;background:#555"></div>
<div class="a" style="left:1027px;top:386px;font-size:11.8px;color:#7a7a7a;white-space:nowrap;line-height:13px">инструменты</div>
<div class="a" style="left:865px;top:492px;width:254px;height:2px;background:#1c1c1c"></div>
<div id="layers" class="a"></div>
<svg style="left:1053px;top:501px" width="60" height="9" viewBox="0 0 60 9"><rect x="0.6" y="0.6" width="8.5" height="7.8" fill="none" stroke="#ddd" stroke-width="1.2"/><path d="M19 3.5H24L21.5 6Z" fill="#ddd"/><path d="M36 0.6H41.5M37 0.6V4.5M40.5 0.6V4.5M35 5H42.5M38.75 5V9" stroke="#ddd" stroke-width="1.2" fill="none"/><path d="M52 0.5L60 8.5M60 0.5L52 8.5" stroke="#ddd" stroke-width="1.3"/></svg>
<div class="a" style="left:865px;top:548px;width:254px;height:32px;background:#2d2d2d;border-top:1px solid #1e1e1e"></div>
<svg style="left:1034px;top:554px" width="14" height="18" viewBox="0 0 14 18"><path d="M3 12L1 14C0 15 1 17 2.5 17C3.5 17 4 16.5 5 15.5L8 12.5C9 11.5 9 10 8 9" stroke="#b0c8d8" stroke-width="1.4" fill="none"/><path d="M11 6L13 4C14 3 13 1 11.5 1C10.5 1 10 1.5 9 2.5L6 5.5C5 6.5 5 8 6 9" stroke="#b0c8d8" stroke-width="1.4" fill="none"/></svg>
<svg style="left:1059px;top:555px" width="15" height="17" viewBox="0 0 15 17"><path d="M3.5 8V5C3.5 1.5 11.5 1.5 11.5 5V8" stroke="#ddd" stroke-width="1.8" fill="none"/><rect x="1" y="8" width="13" height="9" rx="1" fill="#f0c020"/><rect x="6.5" y="11" width="2" height="4" fill="#333"/></svg>
<div class="a" style="left:1084px;top:554px;width:1px;height:22px;background:#3e3e3e"></div>
<div class="a" style="left:1111px;top:550px;width:7px;height:28px;background:#5a5a5a"></div>
<div class="a" style="left:882px;top:581px;width:236px;height:58px;background:#3d93f3"></div>
<svg style="left:886px;top:618px" width="13" height="11" viewBox="0 0 13 11"><rect x="0" y="0" width="13" height="11" fill="#ddd"/><path d="M1 5.5C3.5 1 9.5 1 12 5.5C9.5 10 3.5 10 1 5.5Z" fill="#fff" stroke="#111" stroke-width="0.9"/><circle cx="6.5" cy="5.5" r="2" fill="#111"/></svg>
<div class="a" style="left:903px;top:615px;width:51px;height:7px;background:#111;border:1px solid #fff"></div>
<div class="a" style="left:865px;top:718px;width:254px;height:1px;background:#1e1e1e"></div>
<svg style="left:884px;top:725px" width="16" height="17" viewBox="0 0 16 17"><rect x="0.5" y="4.5" width="11" height="12" fill="#7ab0c8" stroke="#cde"/><rect x="4.5" y="0.5" width="11" height="12" fill="#a8d0e0" stroke="#dfeef4"/></svg>
<div class="dd" style="left:908px;top:733px"></div>
<svg style="left:925px;top:725px" width="18" height="18" viewBox="0 0 18 18"><circle cx="9" cy="9" r="8.6" fill="#000"/><path d="M15.1 2.9A8.6 8.6 0 0 1 2.9 15.1Z" fill="#fff"/></svg>
<div class="dd" style="left:949px;top:733px"></div>
<svg style="left:965px;top:729px" width="18" height="10" viewBox="0 0 18 10"><path d="M0 1C5 -1 13 -1 18 1C18 6 14 10 9 8C4 10 0 6 0 1Z" fill="#e8e8e8"/><ellipse cx="5" cy="4" rx="2.5" ry="1.5" fill="#333"/><ellipse cx="13" cy="4" rx="2.5" ry="1.5" fill="#333"/></svg>
<div class="dd" style="left:990px;top:733px"></div>
<svg style="left:1005px;top:725px" width="18" height="18" viewBox="0 0 18 18"><rect x="1" y="1" width="16" height="16" fill="#bcd" stroke="#ddd"/><rect x="3" y="3" width="8" height="8" fill="#2a4a60"/><rect x="7" y="7" width="8" height="8" fill="#e0eef4"/></svg>
<svg style="left:1035px;top:726px" width="13" height="16" viewBox="0 0 13 16"><rect x="0" y="2" width="13" height="2" fill="#555"/><rect x="1" y="5" width="11" height="11" fill="#4a4a4a"/><path d="M4 6V15M6.5 6V15M9 6V15" stroke="#333"/></svg>
<svg style="left:1089px;top:725px" width="17" height="17" viewBox="0 0 17 17"><rect x="0.5" y="0.5" width="16" height="16" rx="2" fill="#2a78c0" stroke="#8ac"/><rect x="2" y="4" width="13" height="11" fill="#f4f4f4"/><path d="M3.5 9L6 12L11 6" stroke="#d02030" stroke-width="2" fill="none"/></svg>
<!-- learning center -->
<div id="learn" class="a"></div>
<div class="a" style="left:1118px;top:146px;width:2px;height:604px;background:#1c1c1c"></div>
<div class="grip" style="left:1125px;top:152px;height:22px;width:3px"></div>
<div class="ptitle" style="left:1134px;top:152px">Центр обучения</div>
<svg style="left:1314px;top:156px" width="42" height="9" viewBox="0 0 42 9"><path d="M0 3.5H5L2.5 6Z" fill="#ddd"/><path d="M16 0.6H21.5M17 0.6V4.5M20.5 0.6V4.5M15 5H22.5M18.75 5V9" stroke="#ddd" stroke-width="1.2" fill="none"/><path d="M33 0.5L41 8.5M41 0.5L33 8.5" stroke="#ddd" stroke-width="1.3"/></svg>
<svg style="left:1130px;top:181px" width="13" height="13" viewBox="0 0 13 13"><circle cx="6.5" cy="6.5" r="6.2" fill="#4e4e4e"/><path d="M10.5 6.5H3.5M6.5 3.5L3.5 6.5L6.5 9.5" stroke="#a8a8a8" stroke-width="1.5" fill="none"/></svg>
<svg style="left:1154px;top:181px" width="13" height="13" viewBox="0 0 13 13"><path d="M6.5 1L0.5 7H2.5V12.5H5V9H8V12.5H10.5V7H12.5L10.5 5V1.5H9V3.5Z" fill="#9a9a9a"/></svg>
<div class="a" style="left:1177px;top:179px;font-size:13px;font-weight:bold;color:#cfcfcf;white-space:nowrap;line-height:16px">Домашняя страница</div>
<div class="lc-sep" style="top:202px"></div>
<div class="a" style="left:1348px;top:205px;width:10px;height:6px"></div>
<svg style="left:1348px;top:206px" width="10" height="6" viewBox="0 0 10 6"><path d="M0.5 5.5L5 1L9.5 5.5" stroke="#555" fill="none"/></svg>
<div class="a" style="left:1349px;top:217px;width:9px;height:497px;background:#727272"></div>
<svg style="left:1348px;top:741px" width="10" height="6" viewBox="0 0 10 6"><path d="M0.5 0.5L5 5L9.5 0.5" stroke="#555" fill="none"/></svg>
<div class="lc-h" style="top:211.1px">Получение фотографий</div>
<div class="lc-tri" style="top:215.6px"></div>
<div class="lc-d" style="top:232.1px">Импорт фотографий с цифровой</div>
<div class="lc-d" style="top:246.0px">камеры, ПК или сканера.</div>
<div class="lc-sep" style="top:269px"></div>
<div class="lc-h" style="top:277.3px">Быстрые настройки</div>
<div class="lc-tri" style="top:281.8px"></div>
<div class="lc-d" style="top:298.3px">Настройте фотографий так, чтобы они</div>
<div class="lc-d" style="top:312.2px">выглядели как можно лучше.</div>
<div class="lc-sep" style="top:335px"></div>
<div class="lc-h" style="top:344.0px">Ретуширование и</div>
<div class="lc-h" style="top:362.0px">восстановление</div>
<div class="lc-tri" style="top:348.5px"></div>
<div class="lc-d" style="top:383.0px">Устранение дефектов фотографий.</div>
<div class="lc-sep" style="top:403px"></div>
<div class="lc-h" style="top:413.2px">Слои и выделенные</div>
<div class="lc-h" style="top:431.2px">элементы</div>
<div class="lc-tri" style="top:417.7px"></div>
<div class="lc-d" style="top:452.2px">Быстрое и четкое изменение</div>
<div class="lc-d" style="top:466.1px">нескольких элементов.</div>
<div class="lc-sep" style="top:487px"></div>
<div class="lc-h" style="top:494.5px">Текст и графика</div>
<div class="lc-tri" style="top:499.0px"></div>
<div class="lc-d" style="top:515.5px">Расширенные возможности работы с</div>
<div class="lc-d" style="top:529.4px">фотографиями.</div>
<div class="lc-sep" style="top:553px"></div>
<div class="lc-h" style="top:560.7px">Эффекты</div>
<div class="lc-tri" style="top:565.2px"></div>
<div class="lc-d" style="top:581.7px">Добавление художественных эффектов</div>
<div class="lc-d" style="top:595.6px">в фотографии.</div>
<div class="lc-sep" style="top:620px"></div>
<div class="lc-h" style="top:627.0px">Дополнительные настройки</div>
<div class="lc-tri" style="top:631.5px"></div>
<div class="lc-d" style="top:648.0px">Мощные инструменты редактирования</div>
<div class="lc-d" style="top:661.9px">и обработки.</div>
<div class="lc-sep" style="top:686px"></div>
<div class="lc-h" style="top:693.2px">Печать и отправка</div>
<div class="lc-tri" style="top:697.7px"></div>
<div class="lc-d" style="top:714.2px">Печать, отправка по электронной почте</div>
<div class="lc-d" style="top:728.1px">и совместное использование</div>
<div class="lc-d" style="top:742.0px">фотографий.</div>

<div id="status" class="a"></div>
<div class="st" style="left:4px">Для вывода справки нажмите клавишу F1</div>
<div class="st" style="left:1106px">Изображение:&nbsp; 6000 x 3000 x RGB - 8 бит/канал</div>
<div id="dlg" class="a">
  <div id="dlgtitle" class="a">Настройка</div>
  <svg class="a" style="left:880px;top:7px" width="11" height="11" viewBox="0 0 11 11"><path d="M0.5 0.5L10.5 10.5M10.5 0.5L0.5 10.5" stroke="#fff" stroke-width="1.1"/></svg>
  <div id="dlist" class="a">
    <div class="li" style="top:5px">Отмена</div>
    <div class="li" style="top:23px">Вид</div>
    <div class="li" style="top:41px">Отображение и кэширование</div>
    <div class="li" style="top:59px">Панели</div>
    <div class="li sel" style="top:77px">Разное</div>
    <div class="li" style="top:95px">Единицы измерения</div>
    <div class="li" style="top:113px">Прозрачность и затенение</div>
    <div class="li" style="top:131px">Предупреждения</div>
    <div class="li" style="top:149px">Автоматические действия</div>
    <div class="li" style="top:167px">Управление</div>
    <div class="li" style="top:185px">Автосохранение оригинала</div>
    <div class="li" style="top:203px">Вкладки</div>
  </div>
  <div id="dpane" class="a">
    <div class="t" style="left:18px;top:14px">Список недавно использованных файлов содержит</div>
    <div class="spin a" style="left:292px;top:10px;width:56px;height:29px"><span class="sv">10</span><div class="sup"></div><div class="sdn"></div><div class="sdd"></div><div class="sbar" style="width:51px"></div></div>
    <div class="t" style="left:355px;top:14px">(изменения отображаются после перезапуска программы)</div>
    <div class="t" style="left:12px;top:50px">Использовать допуск</div>
    <div class="spin a" style="left:142px;top:46px;width:56px;height:29px"><span class="sv">10</span><div class="sup"></div><div class="sdn"></div><div class="sdd"></div><div class="sbar" style="width:4px"></div></div>
    <div class="t" style="left:206px;top:50px">% для цвета фона при вставке прозрачного выделенного элемента</div>
    <div class="t" style="left:14px;top:92px">Данные в буфере при выходе:</div>
    <div class="combo a" style="left:183px;top:89px;width:112px;height:20px"><span style="position:absolute;left:3px;top:3px">Удалить</span><svg style="position:absolute;right:6px;top:7px" width="9" height="6" viewBox="0 0 9 6"><path d="M0.5 0.5L4.5 4.5L8.5 0.5" stroke="#333" fill="none" stroke-width="1"/></svg></div>
    <div class="cb a" style="left:12px;top:121px"></div><div class="t" style="left:28px;top:121px">Принудительное полное обновление окна при изменении положения элементов изображения</div>
    <div class="cb a ck" style="left:12px;top:142px"></div><div class="t" style="left:28px;top:142px">Отображать заставку при запуске приложения</div>
    <div class="cb a ck" style="left:12px;top:163px"></div><div class="t" style="left:28px;top:163px">Отключить поддержку нажима для указательных устройств типа координатной шайбы</div>
    <div class="cb a ck" style="left:12px;top:184px"></div><div class="t" style="left:28px;top:184px">Сохранить яркость изображения при изменении размера</div>
    <div class="cb a ck" style="left:12px;top:205px"></div><div class="t" style="left:28px;top:205px">Сохранить журнал редактирования в метаданные изображения (JPEG, TIFF, PSPIMAGE)</div>
    <div class="grp a" style="left:12px;top:236px;width:621px;height:112px"></div>
    <div class="t" style="left:19px;top:231px;background:#fff;padding:0 2px">Интерфейс жестового планшета</div>
    <div class="rad a on" style="left:21px;top:257px"></div><div class="t dis" style="left:37px;top:257px;letter-spacing:-0.1px">WinTab - не установлено</div>
    <div class="rad a" style="left:21px;top:278px"></div><div class="t dis" style="left:37px;top:278px;width:193px;overflow:hidden;letter-spacing:-0.15px">Real-Time Stylus (RTS) - не установлено</div>
    <div class="t" style="left:21px;top:301px;line-height:13px;letter-spacing:-0.06px">Если в вашей системе есть оба жестовых интерфейса планшета, выберите необходимый интерфейс для стилуса.<br>(Вступает в силу после перезапуска программы)</div>
  </div>
  <div class="btn a def" style="left:659px;top:409px;width:73px;height:21px">OK</div>
  <div class="btn a" style="left:740px;top:409px;width:73px;height:21px">Отмена</div>
  <div class="btn a" style="left:821px;top:409px;width:73px;height:21px">Справка</div>
</div>
</body></html>
